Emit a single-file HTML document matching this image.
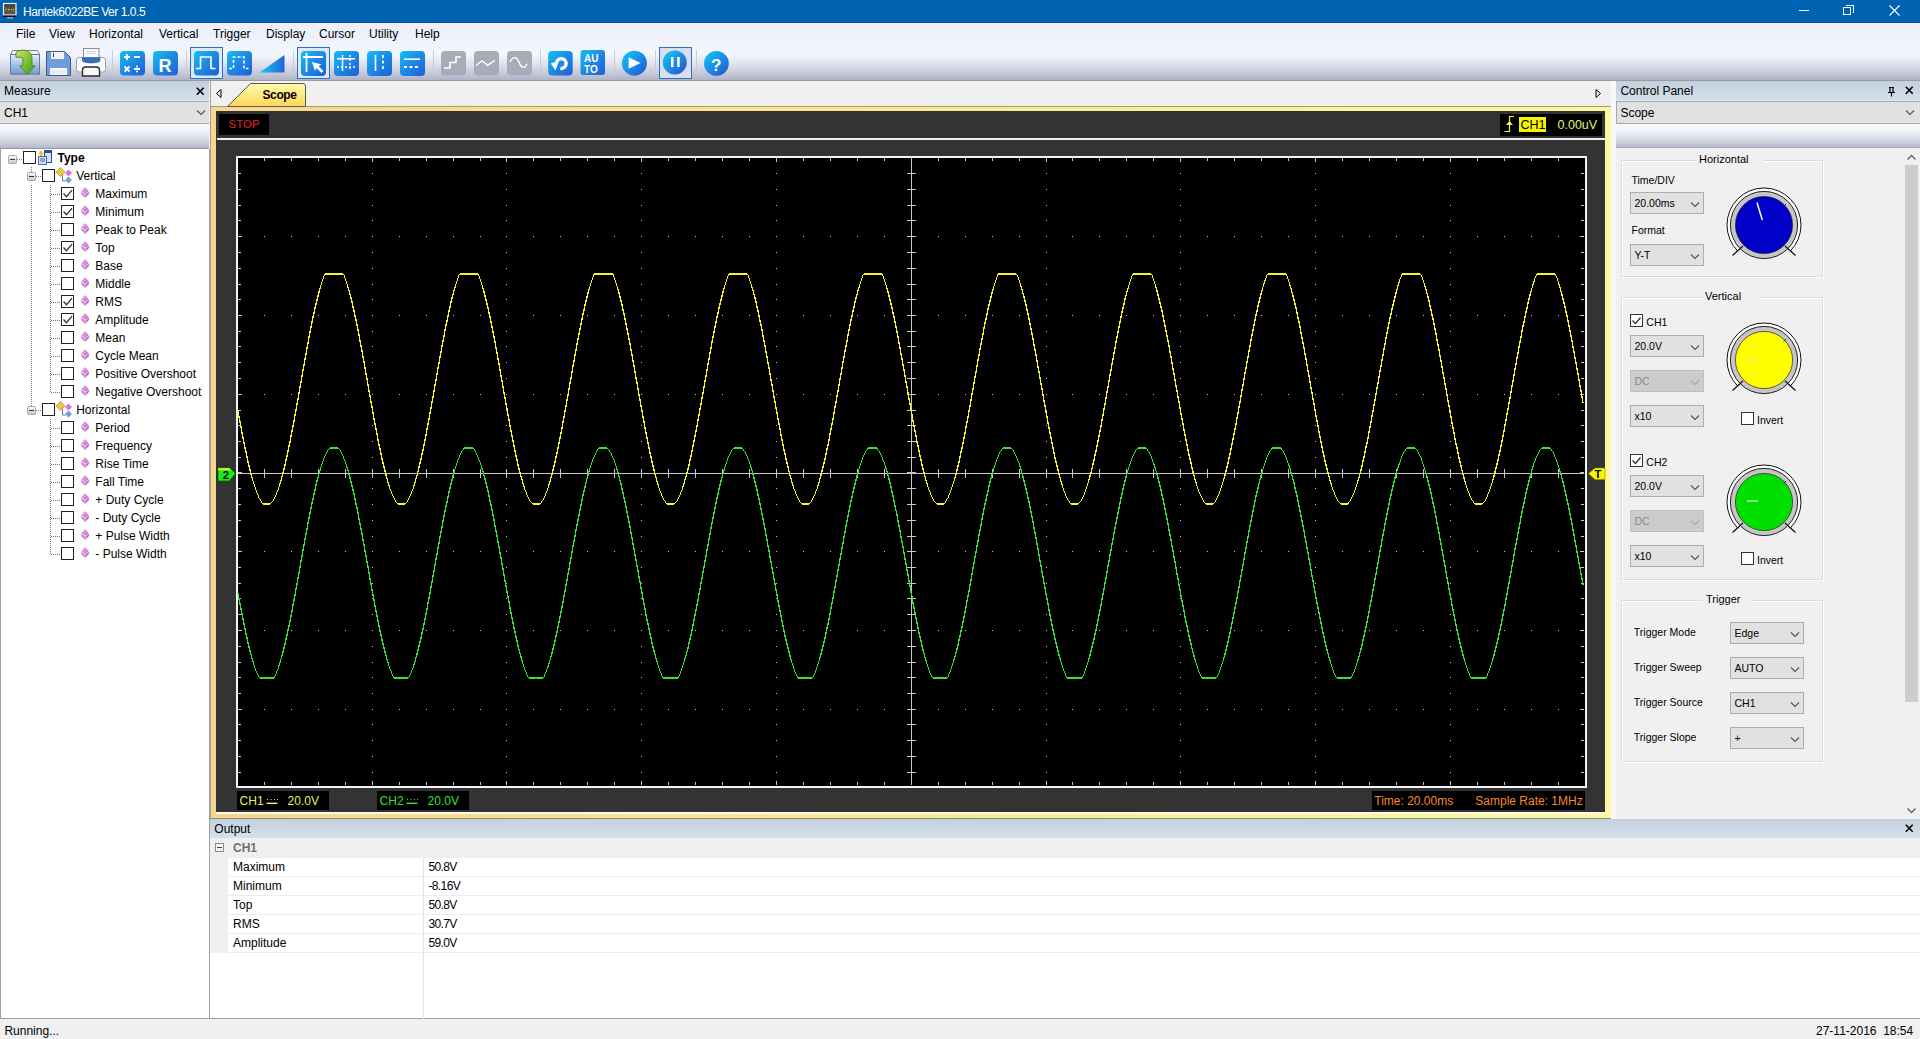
<!DOCTYPE html>
<html><head><meta charset="utf-8">
<style>
*{margin:0;padding:0;box-sizing:border-box}
html,body{width:1920px;height:1039px;overflow:hidden;background:#f0f0f0;font-family:"Liberation Sans",sans-serif;font-size:12px;color:#000}
.a{position:absolute}
.t{position:absolute;white-space:nowrap;line-height:12px;font-size:12px}
.s11{font-size:11px;line-height:11px}
.b{font-weight:bold}
svg{position:absolute;left:0;top:0;overflow:visible}
.combo{position:absolute;background:#e1e1e1;border:1px solid #adadad}
.chev{position:absolute;width:6px;height:6px;border-right:1px solid #333;border-bottom:1px solid #333;transform:rotate(45deg)}
.cb{position:absolute;width:13px;height:13px;border:1px solid #333;background:#fff}
</style></head><body>
<!-- TITLE BAR -->
<div class="a" style="left:0;top:0;width:1920px;height:23px;background:#0063b1;border-bottom:1px solid #0a4f8a"></div>
<svg width="20" height="23" style="left:0;top:0">
<defs><linearGradient id="scr" x1="0" y1="0" x2="0" y2="1"><stop offset="0" stop-color="#2e3a38"/><stop offset="0.5" stop-color="#5c5a40"/><stop offset="1" stop-color="#6a4a3a"/></linearGradient></defs>
<rect x="3.5" y="3.5" width="12.5" height="11.5" fill="url(#scr)" stroke="#eef2fa" stroke-width="1.2"/>
<path d="M5.5 9.5h1M8 9.5h1.5M11 9.5h1M13 9.5h1" stroke="#c8d860" stroke-width="1"/>
<rect x="3" y="15.5" width="13.5" height="1.6" fill="#111"/>
<rect x="7" y="17.2" width="6" height="1.3" fill="#9bb4d8"/>
</svg>
<div class="t" style="left:23px;top:5.8px;color:#fff;letter-spacing:-0.45px">Hantek6022BE Ver 1.0.5</div>
<div class="a" style="left:1799px;top:10px;width:10px;height:1px;background:#fff"></div>
<div class="a" style="left:1843px;top:7px;width:8px;height:8px;border:1px solid #fff"></div>
<div class="a" style="left:1846px;top:5px;width:8px;height:8px;border-top:1px solid #fff;border-right:1px solid #fff"></div>
<svg width="12" height="12" style="left:1889px;top:5px"><path d="M0.5 0.5L10.5 10.5M10.5 0.5L0.5 10.5" stroke="#fff" stroke-width="1.1"/></svg>
<!-- MENU + TOOLBAR -->
<div class="a" style="left:0;top:23px;width:1920px;height:58px;background:linear-gradient(#eceffa 0px,#f0f3fc 20px,#f3f6fd 32px,#dde0ec 42px,#c5c9d9 50px,#b0b4c6 57px);border-bottom:1px solid #9a9aa2"></div>
<div class="t" style="left:16px;top:28px">File</div>
<div class="t" style="left:49px;top:28px">View</div>
<div class="t" style="left:89px;top:28px">Horizontal</div>
<div class="t" style="left:159px;top:28px">Vertical</div>
<div class="t" style="left:213px;top:28px">Trigger</div>
<div class="t" style="left:266px;top:28px">Display</div>
<div class="t" style="left:319px;top:28px">Cursor</div>
<div class="t" style="left:369px;top:28px">Utility</div>
<div class="t" style="left:415px;top:28px">Help</div>
<svg width="740" height="82" style="left:0;top:0">
<defs>
<linearGradient id="bg" x1="0" y1="0" x2="1" y2="1"><stop offset="0" stop-color="#12c0f4"/><stop offset="0.45" stop-color="#1c8ee6"/><stop offset="1" stop-color="#1f5ed6"/></linearGradient>
<linearGradient id="bgc" x1="0" y1="0" x2="1" y2="1"><stop offset="0" stop-color="#0cd0f8"/><stop offset="0.5" stop-color="#1c8ee6"/><stop offset="1" stop-color="#1e50c8"/></linearGradient>
<linearGradient id="fold" x1="0" y1="0" x2="0" y2="1"><stop offset="0" stop-color="#e4ecf8"/><stop offset="1" stop-color="#6f9ad8"/></linearGradient>
<linearGradient id="grn" x1="0" y1="0" x2="1" y2="1"><stop offset="0" stop-color="#c8e860"/><stop offset="1" stop-color="#3a9a10"/></linearGradient>
<linearGradient id="ramp" x1="0" y1="0" x2="1" y2="0"><stop offset="0" stop-color="#20c8f0"/><stop offset="1" stop-color="#1e64d8"/></linearGradient>
</defs>
<!-- open -->
<path d="M12.5 50.5h25l2 4v19.5h-28.5v-19.5z" fill="#f4f6fa" stroke="#7a7f88" stroke-width="1"/>
<rect x="10.5" y="54.5" width="29" height="19.5" fill="url(#fold)" stroke="#6b7a90" stroke-width="1"/>
<path d="M16 52.5c3-2.5 8-3 11.5-1.5c3 1.5 4.5 4 4.5 8v6.8h3.2l-7.8 8.7l-7.8-8.7h3.3v-5.3c0-2-1-3.3-3-3.3h-4z" fill="url(#grn)" stroke="#4a8a18" stroke-width="0.9"/>
<!-- save -->
<path d="M46.5 51.5h18l6 6v18h-24z" fill="#6f9ed8" stroke="#38588a" stroke-width="1"/>
<rect x="51" y="52" width="13" height="7" fill="#eef4fb"/>
<rect x="50" y="68" width="17" height="7" fill="#f4f8fc"/>
<path d="M51 71h15M51 73h15" stroke="#c8d4e4" stroke-width="0.6"/>
<rect x="53" y="53" width="1" height="4" fill="#445"/>
<!-- print -->
<rect x="83.5" y="48.5" width="15.5" height="9" fill="#f8fafd" stroke="#8a8f98" stroke-width="1"/>
<path d="M86 51.5h10M86 53.5h10" stroke="#b8c8e0" stroke-width="0.7"/>
<rect x="76.5" y="57.5" width="29" height="14.5" rx="2.5" fill="#fbfcfd" stroke="#9a9ea8" stroke-width="1"/>
<path d="M82 57.2h18.4v3c0 2-3 3-9.2 3s-9.2-1-9.2-3z" fill="#3d6cb6"/>
<path d="M82.5 70c0-2 1-3 3-3h11c2 0 3 1 3 3v6h-17z" fill="#fdf6f6" stroke="#2a2a2a" stroke-width="1.4"/>
<rect x="112" y="50" width="1" height="27" fill="#c8ccd8"/>
<rect x="186" y="50" width="1" height="27" fill="#c8ccd8"/>
<rect x="293" y="50" width="1" height="27" fill="#c8ccd8"/>
<rect x="433" y="50" width="1" height="27" fill="#c8ccd8"/>
<rect x="540" y="50" width="1" height="27" fill="#c8ccd8"/>
<rect x="614" y="50" width="1" height="27" fill="#c8ccd8"/>
<rect x="655" y="50" width="1" height="27" fill="#c8ccd8"/>
<rect x="696" y="50" width="1" height="27" fill="#c8ccd8"/>
<!-- selected boxes -->
<rect x="190.5" y="47.5" width="32" height="31" fill="#dde8f6" stroke="#2f6fc8" stroke-width="1"/>
<rect x="297.5" y="47.5" width="32" height="31" fill="#dde8f6" stroke="#2f6fc8" stroke-width="1"/>
<rect x="659.5" y="47.5" width="32" height="31" fill="#d8dfec" stroke="#2f6fc8" stroke-width="1"/>
<!-- calc -->
<rect x="120" y="51" width="25" height="24.5" rx="4" fill="url(#bg)"/>
<path d="M124 57h6M127 54v6M134 57h6M124.5 66.5l5 5M129.5 66.5l-5 5M134 69h6" stroke="#fff" stroke-width="1.8"/>
<circle cx="137" cy="66.5" r="1" fill="#fff"/><circle cx="137" cy="71.5" r="1" fill="#fff"/>
<!-- R -->
<rect x="153" y="51" width="25" height="24.5" rx="4" fill="url(#bg)"/>
<text x="158.5" y="71.5" font-family="Liberation Sans" font-weight="bold" font-size="18" fill="#fff">R</text>
<!-- pulse -->
<rect x="194" y="51" width="25" height="24.5" rx="4" fill="url(#bg)"/>
<path d="M196 68.5h4.5v-11.5h10.5v11.5h4.5" fill="none" stroke="#fff" stroke-width="1.6"/>
<!-- dashed pulse -->
<rect x="227" y="51" width="25" height="24.5" rx="4" fill="url(#bg)"/>
<path d="M229 68.5h4.5v-11.5h10.5v11.5h4.5" fill="none" stroke="#fff" stroke-width="1.6" stroke-dasharray="3,2"/>
<!-- ramp -->
<path d="M259.5 72.5L284.5 55V72.5z" fill="url(#ramp)"/>
<!-- cursor -->
<rect x="301" y="51" width="25" height="25" rx="4" fill="url(#bg)"/>
<path d="M306.5 53v19M303 57h20" stroke="#fff" stroke-width="1.8"/>
<path d="M312 62l3 9l1.5-3l5 5l2-2l-5-5l3-1.5z" fill="#fff"/>
<!-- grid -->
<rect x="334" y="51" width="25" height="25" rx="4" fill="url(#bg)"/>
<path d="M342.5 55v16M337 58.8h18" stroke="#fff" stroke-width="1.5"/>
<path d="M350 55v16M337 67h18" stroke="#fff" stroke-width="1.5" stroke-dasharray="2,2"/>
<!-- vlines -->
<rect x="367" y="51" width="25" height="25" rx="4" fill="url(#bg)"/>
<path d="M375.5 55v16" stroke="#fff" stroke-width="1.6"/>
<path d="M383 55v16" stroke="#fff" stroke-width="1.8" stroke-dasharray="3,2.5"/>
<!-- hlines -->
<rect x="400" y="51" width="25" height="25" rx="4" fill="url(#bg)"/>
<path d="M404 59.2h16" stroke="#fff" stroke-width="1.6"/>
<path d="M404 67h16" stroke="#fff" stroke-width="1.8" stroke-dasharray="3,2.5"/>
<!-- gray -->
<rect x="441" y="51" width="25" height="24.5" rx="4" fill="#a9abb7"/>
<path d="M444 68h6v-5.5h6v-5.5h5" fill="none" stroke="#fff" stroke-width="1.6"/>
<rect x="474" y="51" width="25" height="24.5" rx="4" fill="#a9abb7"/>
<path d="M476 65.5l6-4.7l5.7 4.5l7-4.9" fill="none" stroke="#fff" stroke-width="1.4"/>
<rect x="507" y="51" width="25" height="24.5" rx="4" fill="#a9abb7"/>
<path d="M510 62c2-4 4-5 6-4c2 1 3 5 5 8c2 2 4 2 6-2" fill="none" stroke="#fff" stroke-width="1.4"/>
<!-- refresh -->
<rect x="548.2" y="51" width="24.5" height="24.5" rx="4" fill="url(#bg)"/>
<path d="M560.4 68.4A4.9 4.9 0 1 0 556.6 61.9" fill="none" stroke="#fff" stroke-width="3.4"/>
<path d="M550.8 63.5L559 60.6L555.5 70.4z" fill="#fff"/>
<!-- auto -->
<rect x="580.5" y="50" width="24.5" height="25" rx="3" fill="url(#bg)"/>
<text x="584" y="62" font-family="Liberation Sans" font-weight="bold" font-size="10" fill="#fff">AU</text>
<text x="584" y="73" font-family="Liberation Sans" font-weight="bold" font-size="10" fill="#fff">TO</text>
<!-- play -->
<circle cx="634.4" cy="63.2" r="12.5" fill="url(#bgc)"/>
<path d="M628.6 57.3v11.4l11.9-5.7z" fill="#fff"/>
<!-- pause -->
<circle cx="674.8" cy="62.5" r="12" fill="url(#bgc)"/>
<rect x="671" y="57" width="2.5" height="10" fill="#fff"/><rect x="677.2" y="57" width="2.5" height="10" fill="#fff"/>
<!-- help -->
<circle cx="716.4" cy="63.4" r="12.4" fill="url(#bgc)"/>
<text x="711" y="70.5" font-family="Liberation Sans" font-weight="bold" font-size="17" fill="#fff">?</text>
</svg>
<div class="a" style="left:210px;top:81px;width:1401px;height:26px;background:#f0f0f0;border-left:1px solid #a0a0a0;border-bottom:1px solid #a09a78"></div>
<svg width="1620" height="110" style="left:0;top:0"><defs><linearGradient id="tab" x1="0" y1="0" x2="0" y2="1"><stop offset="0" stop-color="#fffbb0"/><stop offset="0.5" stop-color="#ffe880"/><stop offset="1" stop-color="#fcd560"/></linearGradient></defs><path d="M227.5 106.5L250.5 83.5H303a2.5 2.5 0 0 1 2.5 2.5V106.5z" fill="url(#tab)" stroke="#5a5a50" stroke-width="1"/><path d="M221 89.5L216.5 93.5L221 97.5z" fill="none" stroke="#000" stroke-width="1"/><path d="M1596 89.5L1600.5 93.5L1596 97.5z" fill="none" stroke="#000" stroke-width="1"/></svg>
<div class="t" style="left:262.5px;top:89.04px;font-size:12px;line-height:12px;font-weight:bold;letter-spacing:-0.4px">Scope</div>
<div class="a" style="left:210px;top:107px;width:1401px;height:712px;background:linear-gradient(90deg,#f8d68a,#fbe48e 35%,#f8ee90 60%,#fff6a4);border-left:1px solid #a0a0a0;border-bottom:1px solid #8a8a80"></div>
<div class="a" style="left:216px;top:111px;width:1389px;height:703px;background:#333333;border-bottom:2px solid #fbfaf0"></div>
<div class="a" style="left:219px;top:114px;width:50px;height:21px;background:#000"></div>
<div class="t" style="left:228.5px;top:118.97px;font-size:11.5px;line-height:11.5px;color:#e02424">STOP</div>
<div class="a" style="left:217px;top:138px;width:1388px;height:2px;background:#f0f0f0"></div>
<div class="a" style="left:1500px;top:114px;width:102px;height:22px;background:#000"></div>
<svg width="12" height="18" style="left:1503px;top:115px"><path d="M1.5 16.5H6.5V1.5H11" fill="none" stroke="#f0f060" stroke-width="1.2"/><path d="M3 10l3.5-4l3.5 4z" fill="#f0f060"/></svg>
<div class="a" style="left:1519px;top:117px;width:27px;height:15px;background:#f4f400"></div>
<div class="t" style="left:1520.5px;top:119.02px;font-size:12.5px;line-height:12.5px;color:#000">CH1</div>
<div class="t" style="left:1557.5px;top:119.02px;font-size:12.5px;line-height:12.5px;color:#e8f070">0.00uV</div>
<div class="a" style="left:236px;top:156px;width:1351px;height:632px;background:#000;border:2px solid #f4f4f4"></div>
<svg width="1920" height="1039" style="left:0;top:0"><path d="M506 756h1v1h-1zM749 236h1v1h-1zM1180 441h1v1h-1zM318 315h1v1h-1zM533 630h1v1h-1zM1288 630h1v1h-1zM1315 504h1v1h-1zM641 410h1v1h-1zM372 551h1v1h-1zM1261 551h1v1h-1zM1046 724h1v1h-1zM1180 724h1v1h-1zM291 315h1v1h-1zM506 630h1v1h-1zM1180 315h1v1h-1zM1504 394h1v1h-1zM641 693h1v1h-1zM1315 378h1v1h-1zM345 551h1v1h-1zM776 756h1v1h-1zM1019 236h1v1h-1zM641 284h1v1h-1zM372 425h1v1h-1zM1234 551h1v1h-1zM1558 630h1v1h-1zM1046 598h1v1h-1zM506 724h1v1h-1zM1180 598h1v1h-1zM1046 189h1v1h-1zM722 394h1v1h-1zM1180 189h1v1h-1zM1477 394h1v1h-1zM1315 252h1v1h-1zM992 236h1v1h-1zM1126 236h1v1h-1zM1046 472h1v1h-1zM506 598h1v1h-1zM1504 551h1v1h-1zM506 189h1v1h-1zM399 630h1v1h-1zM776 724h1v1h-1zM1099 236h1v1h-1zM641 252h1v1h-1zM1423 315h1v1h-1zM776 315h1v1h-1zM1046 346h1v1h-1zM1477 551h1v1h-1zM506 472h1v1h-1zM1315 220h1v1h-1zM830 709h1v1h-1zM776 598h1v1h-1zM776 189h1v1h-1zM1207 394h1v1h-1zM506 346h1v1h-1zM722 236h1v1h-1zM264 315h1v1h-1zM803 709h1v1h-1zM776 472h1v1h-1zM1531 630h1v1h-1zM506 220h1v1h-1zM1153 315h1v1h-1zM1450 394h1v1h-1zM695 394h1v1h-1zM372 662h1v1h-1zM776 346h1v1h-1zM1207 551h1v1h-1zM749 630h1v1h-1zM1450 677h1v1h-1zM560 709h1v1h-1zM372 756h1v1h-1zM1450 268h1v1h-1zM1396 315h1v1h-1zM1046 709h1v1h-1zM965 394h1v1h-1zM318 394h1v1h-1zM533 709h1v1h-1zM1450 551h1v1h-1zM803 551h1v1h-1zM372 630h1v1h-1zM1261 630h1v1h-1zM938 394h1v1h-1zM1046 583h1v1h-1zM291 394h1v1h-1zM506 709h1v1h-1zM1180 394h1v1h-1zM641 772h1v1h-1zM1315 457h1v1h-1zM1450 425h1v1h-1zM695 236h1v1h-1zM345 630h1v1h-1zM1019 315h1v1h-1zM1234 630h1v1h-1zM372 504h1v1h-1zM1046 677h1v1h-1zM1180 677h1v1h-1zM318 551h1v1h-1zM506 583h1v1h-1zM1315 740h1v1h-1zM1180 268h1v1h-1zM560 551h1v1h-1zM641 646h1v1h-1zM1315 331h1v1h-1zM992 315h1v1h-1zM1126 315h1v1h-1zM776 709h1v1h-1zM372 378h1v1h-1zM1046 551h1v1h-1zM291 551h1v1h-1zM965 236h1v1h-1zM1180 551h1v1h-1zM1504 630h1v1h-1zM533 551h1v1h-1zM506 457h1v1h-1zM1315 614h1v1h-1zM641 520h1v1h-1zM1099 315h1v1h-1zM1315 205h1v1h-1zM372 472h1v1h-1zM668 394h1v1h-1zM1423 394h1v1h-1zM776 583h1v1h-1zM938 236h1v1h-1zM1046 425h1v1h-1zM1477 630h1v1h-1zM506 551h1v1h-1zM1180 425h1v1h-1zM641 614h1v1h-1zM1315 488h1v1h-1zM776 677h1v1h-1zM372 346h1v1h-1zM1369 315h1v1h-1zM1046 299h1v1h-1zM506 425h1v1h-1zM722 315h1v1h-1zM264 394h1v1h-1zM641 488h1v1h-1zM776 551h1v1h-1zM372 220h1v1h-1zM1342 315h1v1h-1zM1046 173h1v1h-1zM506 299h1v1h-1zM1450 662h1v1h-1zM1153 394h1v1h-1zM641 362h1v1h-1zM668 236h1v1h-1zM1423 236h1v1h-1zM776 425h1v1h-1zM1207 630h1v1h-1zM749 709h1v1h-1zM264 551h1v1h-1zM1450 756h1v1h-1zM506 173h1v1h-1zM641 236h1v1h-1zM776 299h1v1h-1zM1396 394h1v1h-1zM1450 630h1v1h-1zM1019 709h1v1h-1zM372 709h1v1h-1zM1072 315h1v1h-1zM776 173h1v1h-1zM1046 662h1v1h-1zM1180 662h1v1h-1zM911 236h1v1h-1zM453 315h1v1h-1zM992 709h1v1h-1zM1450 504h1v1h-1zM1153 236h1v1h-1zM695 315h1v1h-1zM345 709h1v1h-1zM372 583h1v1h-1zM1396 551h1v1h-1zM749 551h1v1h-1zM1180 756h1v1h-1zM318 630h1v1h-1zM1046 536h1v1h-1zM506 662h1v1h-1zM1450 378h1v1h-1zM1126 394h1v1h-1zM372 457h1v1h-1zM1046 630h1v1h-1zM291 630h1v1h-1zM965 315h1v1h-1zM1180 630h1v1h-1zM1504 709h1v1h-1zM1046 410h1v1h-1zM506 536h1v1h-1zM1315 693h1v1h-1zM1450 472h1v1h-1zM1019 551h1v1h-1zM372 740h1v1h-1zM1315 284h1v1h-1zM1450 252h1v1h-1zM1099 394h1v1h-1zM776 662h1v1h-1zM372 331h1v1h-1zM938 315h1v1h-1zM1046 504h1v1h-1zM722 709h1v1h-1zM1180 504h1v1h-1zM1477 709h1v1h-1zM506 410h1v1h-1zM1315 567h1v1h-1zM1450 346h1v1h-1zM992 551h1v1h-1zM1126 551h1v1h-1zM776 536h1v1h-1zM372 205h1v1h-1zM480 394h1v1h-1zM1369 394h1v1h-1zM1046 378h1v1h-1zM506 504h1v1h-1zM1180 378h1v1h-1zM884 236h1v1h-1zM506 284h1v1h-1zM641 567h1v1h-1zM1315 441h1v1h-1zM1450 220h1v1h-1zM1423 630h1v1h-1zM776 630h1v1h-1zM372 299h1v1h-1zM776 410h1v1h-1zM1342 394h1v1h-1zM1180 472h1v1h-1zM1046 252h1v1h-1zM506 378h1v1h-1zM857 236h1v1h-1zM641 441h1v1h-1zM668 315h1v1h-1zM776 504h1v1h-1zM1207 709h1v1h-1zM372 173h1v1h-1zM722 551h1v1h-1zM1180 346h1v1h-1zM264 630h1v1h-1zM641 724h1v1h-1zM506 252h1v1h-1zM641 315h1v1h-1zM776 378h1v1h-1zM480 236h1v1h-1zM614 236h1v1h-1zM1046 220h1v1h-1zM1369 236h1v1h-1zM1180 220h1v1h-1zM1153 630h1v1h-1zM1450 709h1v1h-1zM695 709h1v1h-1zM641 598h1v1h-1zM641 189h1v1h-1zM1072 394h1v1h-1zM776 252h1v1h-1zM587 236h1v1h-1zM1342 236h1v1h-1zM911 315h1v1h-1zM453 394h1v1h-1zM1450 583h1v1h-1zM1396 630h1v1h-1zM965 709h1v1h-1zM318 709h1v1h-1zM1450 457h1v1h-1zM372 536h1v1h-1zM938 709h1v1h-1zM776 220h1v1h-1zM291 709h1v1h-1zM1180 709h1v1h-1zM1315 772h1v1h-1zM1450 740h1v1h-1zM695 551h1v1h-1zM1019 630h1v1h-1zM1450 331h1v1h-1zM1072 236h1v1h-1zM372 410h1v1h-1zM1180 583h1v1h-1zM453 236h1v1h-1zM1315 646h1v1h-1zM992 630h1v1h-1zM1126 630h1v1h-1zM372 693h1v1h-1zM1450 205h1v1h-1zM965 551h1v1h-1zM372 284h1v1h-1zM1046 457h1v1h-1zM506 772h1v1h-1zM1180 457h1v1h-1zM884 315h1v1h-1zM1099 630h1v1h-1zM1315 520h1v1h-1zM1450 299h1v1h-1zM668 709h1v1h-1zM1423 709h1v1h-1zM938 551h1v1h-1zM1046 740h1v1h-1zM1180 740h1v1h-1zM1046 331h1v1h-1zM1180 331h1v1h-1zM857 315h1v1h-1zM426 394h1v1h-1zM1315 394h1v1h-1zM1450 173h1v1h-1zM830 236h1v1h-1zM372 252h1v1h-1zM1369 630h1v1h-1zM1046 614h1v1h-1zM506 740h1v1h-1zM722 630h1v1h-1zM264 709h1v1h-1zM1046 205h1v1h-1zM506 331h1v1h-1zM1180 205h1v1h-1zM1288 394h1v1h-1zM641 394h1v1h-1zM1315 268h1v1h-1zM776 457h1v1h-1zM1342 630h1v1h-1zM480 315h1v1h-1zM1046 488h1v1h-1zM614 315h1v1h-1zM506 614h1v1h-1zM1180 299h1v1h-1zM1153 709h1v1h-1zM641 677h1v1h-1zM506 205h1v1h-1zM1315 362h1v1h-1zM668 551h1v1h-1zM1423 551h1v1h-1zM776 740h1v1h-1zM641 268h1v1h-1zM776 331h1v1h-1zM1558 394h1v1h-1zM587 315h1v1h-1zM911 394h1v1h-1zM506 488h1v1h-1zM1180 173h1v1h-1zM426 236h1v1h-1zM641 551h1v1h-1zM1315 236h1v1h-1zM776 614h1v1h-1zM1396 709h1v1h-1zM776 205h1v1h-1zM506 362h1v1h-1zM1450 536h1v1h-1zM1288 236h1v1h-1zM641 425h1v1h-1zM399 394h1v1h-1zM1072 630h1v1h-1zM776 488h1v1h-1zM911 551h1v1h-1zM453 630h1v1h-1zM1153 551h1v1h-1zM695 630h1v1h-1zM1450 410h1v1h-1zM1558 236h1v1h-1zM1450 693h1v1h-1zM1126 709h1v1h-1zM372 772h1v1h-1zM1450 284h1v1h-1zM965 630h1v1h-1zM1180 536h1v1h-1zM1531 394h1v1h-1zM884 394h1v1h-1zM1099 709h1v1h-1zM1450 567h1v1h-1zM399 236h1v1h-1zM372 646h1v1h-1zM938 630h1v1h-1zM1180 410h1v1h-1zM857 394h1v1h-1zM372 520h1v1h-1zM830 315h1v1h-1zM480 709h1v1h-1zM1369 709h1v1h-1zM1046 693h1v1h-1zM1180 693h1v1h-1zM884 551h1v1h-1zM1046 284h1v1h-1zM1315 756h1v1h-1zM1180 284h1v1h-1zM641 662h1v1h-1zM372 614h1v1h-1zM803 315h1v1h-1zM1342 709h1v1h-1zM1261 394h1v1h-1zM1046 567h1v1h-1zM614 394h1v1h-1zM506 693h1v1h-1zM857 551h1v1h-1zM1531 236h1v1h-1zM641 756h1v1h-1zM1099 551h1v1h-1zM668 630h1v1h-1zM372 488h1v1h-1zM1234 394h1v1h-1zM587 394h1v1h-1zM1046 441h1v1h-1zM506 567h1v1h-1zM1315 724h1v1h-1zM1180 252h1v1h-1zM426 315h1v1h-1zM641 630h1v1h-1zM1315 315h1v1h-1zM560 315h1v1h-1zM776 693h1v1h-1zM372 362h1v1h-1zM480 551h1v1h-1zM614 551h1v1h-1zM776 284h1v1h-1zM1369 551h1v1h-1zM1046 315h1v1h-1zM506 441h1v1h-1zM1315 598h1v1h-1zM533 315h1v1h-1zM1288 315h1v1h-1zM641 504h1v1h-1zM1315 189h1v1h-1zM1072 709h1v1h-1zM776 567h1v1h-1zM372 236h1v1h-1zM587 551h1v1h-1zM1342 551h1v1h-1zM1261 236h1v1h-1zM911 630h1v1h-1zM453 709h1v1h-1zM506 315h1v1h-1zM1315 472h1v1h-1zM641 378h1v1h-1zM345 236h1v1h-1zM776 441h1v1h-1zM1234 236h1v1h-1zM1558 315h1v1h-1zM1450 772h1v1h-1zM641 472h1v1h-1zM1315 346h1v1h-1zM1450 646h1v1h-1zM1504 236h1v1h-1zM641 346h1v1h-1zM399 315h1v1h-1zM1072 551h1v1h-1zM453 551h1v1h-1zM1477 236h1v1h-1zM1450 520h1v1h-1zM641 220h1v1h-1zM830 394h1v1h-1zM1046 772h1v1h-1zM1180 772h1v1h-1zM884 630h1v1h-1zM1450 614h1v1h-1zM803 394h1v1h-1zM1046 646h1v1h-1zM1180 646h1v1h-1zM857 630h1v1h-1zM1531 315h1v1h-1zM426 709h1v1h-1zM1315 709h1v1h-1zM1450 488h1v1h-1zM830 551h1v1h-1zM372 567h1v1h-1zM1046 520h1v1h-1zM1207 236h1v1h-1zM749 315h1v1h-1zM506 646h1v1h-1zM1180 520h1v1h-1zM1288 709h1v1h-1zM641 709h1v1h-1zM1315 583h1v1h-1zM1450 362h1v1h-1zM560 394h1v1h-1zM776 772h1v1h-1zM372 441h1v1h-1zM480 630h1v1h-1zM614 630h1v1h-1zM1180 614h1v1h-1zM1046 394h1v1h-1zM506 520h1v1h-1zM1315 677h1v1h-1zM533 394h1v1h-1zM641 583h1v1h-1zM372 724h1v1h-1zM1450 236h1v1h-1zM803 236h1v1h-1zM776 646h1v1h-1zM372 315h1v1h-1zM587 630h1v1h-1zM1558 709h1v1h-1zM1261 315h1v1h-1zM911 709h1v1h-1zM1180 488h1v1h-1zM1046 268h1v1h-1zM426 551h1v1h-1zM506 394h1v1h-1zM1315 551h1v1h-1zM641 457h1v1h-1zM372 598h1v1h-1zM345 315h1v1h-1zM776 520h1v1h-1zM1234 315h1v1h-1zM372 189h1v1h-1zM1046 362h1v1h-1zM506 677h1v1h-1zM1180 362h1v1h-1zM318 236h1v1h-1zM1288 551h1v1h-1zM641 740h1v1h-1zM506 268h1v1h-1zM1315 425h1v1h-1zM560 236h1v1h-1zM399 709h1v1h-1zM641 331h1v1h-1zM776 394h1v1h-1zM1046 236h1v1h-1zM291 236h1v1h-1zM1180 236h1v1h-1zM1504 315h1v1h-1zM533 236h1v1h-1zM1315 299h1v1h-1zM641 205h1v1h-1zM1558 551h1v1h-1zM776 268h1v1h-1zM1477 315h1v1h-1zM506 236h1v1h-1zM641 299h1v1h-1zM1315 173h1v1h-1zM776 362h1v1h-1zM1531 709h1v1h-1zM884 709h1v1h-1zM399 551h1v1h-1zM641 173h1v1h-1zM776 236h1v1h-1zM857 709h1v1h-1zM830 630h1v1h-1zM1207 315h1v1h-1zM749 394h1v1h-1zM1315 662h1v1h-1zM264 236h1v1h-1zM1450 441h1v1h-1zM803 630h1v1h-1zM1261 709h1v1h-1zM614 709h1v1h-1zM1531 551h1v1h-1zM1450 724h1v1h-1zM1315 536h1v1h-1zM1450 315h1v1h-1zM1019 394h1v1h-1zM1234 709h1v1h-1zM372 394h1v1h-1zM587 709h1v1h-1zM1046 756h1v1h-1zM1180 567h1v1h-1zM426 630h1v1h-1zM1315 630h1v1h-1zM1450 598h1v1h-1zM560 630h1v1h-1zM641 536h1v1h-1zM372 677h1v1h-1zM1315 410h1v1h-1zM1450 189h1v1h-1zM992 394h1v1h-1zM345 394h1v1h-1zM372 268h1v1h-1zM1396 236h1v1h-1z" fill="#c0c0c0"/>
<rect x="238" y="473" width="1346" height="1" fill="#c8c8c8"/>
<rect x="911" y="158" width="1" height="627" fill="#c8c8c8"/>
<path d="M264 469h1v9h-1zM291 469h1v9h-1zM318 469h1v9h-1zM345 469h1v9h-1zM372 469h1v9h-1zM399 469h1v9h-1zM426 469h1v9h-1zM453 469h1v9h-1zM480 469h1v9h-1zM506 469h1v9h-1zM533 469h1v9h-1zM560 469h1v9h-1zM587 469h1v9h-1zM614 469h1v9h-1zM641 469h1v9h-1zM668 469h1v9h-1zM695 469h1v9h-1zM722 469h1v9h-1zM749 469h1v9h-1zM776 469h1v9h-1zM803 469h1v9h-1zM830 469h1v9h-1zM857 469h1v9h-1zM884 469h1v9h-1zM911 469h1v9h-1zM938 469h1v9h-1zM965 469h1v9h-1zM992 469h1v9h-1zM1019 469h1v9h-1zM1046 469h1v9h-1zM1072 469h1v9h-1zM1099 469h1v9h-1zM1126 469h1v9h-1zM1153 469h1v9h-1zM1180 469h1v9h-1zM1207 469h1v9h-1zM1234 469h1v9h-1zM1261 469h1v9h-1zM1288 469h1v9h-1zM1315 469h1v9h-1zM1342 469h1v9h-1zM1369 469h1v9h-1zM1396 469h1v9h-1zM1423 469h1v9h-1zM1450 469h1v9h-1zM1477 469h1v9h-1zM1504 469h1v9h-1zM1531 469h1v9h-1zM1558 469h1v9h-1zM907 173h9v1h-9zM907 189h9v1h-9zM907 205h9v1h-9zM907 220h9v1h-9zM907 236h9v1h-9zM907 252h9v1h-9zM907 268h9v1h-9zM907 284h9v1h-9zM907 299h9v1h-9zM907 315h9v1h-9zM907 331h9v1h-9zM907 346h9v1h-9zM907 362h9v1h-9zM907 378h9v1h-9zM907 394h9v1h-9zM907 410h9v1h-9zM907 425h9v1h-9zM907 441h9v1h-9zM907 457h9v1h-9zM907 472h9v1h-9zM907 488h9v1h-9zM907 504h9v1h-9zM907 520h9v1h-9zM907 536h9v1h-9zM907 551h9v1h-9zM907 567h9v1h-9zM907 583h9v1h-9zM907 598h9v1h-9zM907 614h9v1h-9zM907 630h9v1h-9zM907 646h9v1h-9zM907 662h9v1h-9zM907 677h9v1h-9zM907 693h9v1h-9zM907 709h9v1h-9zM907 724h9v1h-9zM907 740h9v1h-9zM907 756h9v1h-9zM907 772h9v1h-9zM264 158h1v3h-1zM264 782h1v3h-1zM291 158h1v3h-1zM291 782h1v3h-1zM318 158h1v3h-1zM318 782h1v3h-1zM345 158h1v3h-1zM345 782h1v3h-1zM372 158h1v4h-1zM372 781h1v4h-1zM399 158h1v3h-1zM399 782h1v3h-1zM426 158h1v3h-1zM426 782h1v3h-1zM453 158h1v3h-1zM453 782h1v3h-1zM480 158h1v3h-1zM480 782h1v3h-1zM506 158h1v4h-1zM506 781h1v4h-1zM533 158h1v3h-1zM533 782h1v3h-1zM560 158h1v3h-1zM560 782h1v3h-1zM587 158h1v3h-1zM587 782h1v3h-1zM614 158h1v3h-1zM614 782h1v3h-1zM641 158h1v4h-1zM641 781h1v4h-1zM668 158h1v3h-1zM668 782h1v3h-1zM695 158h1v3h-1zM695 782h1v3h-1zM722 158h1v3h-1zM722 782h1v3h-1zM749 158h1v3h-1zM749 782h1v3h-1zM776 158h1v4h-1zM776 781h1v4h-1zM803 158h1v3h-1zM803 782h1v3h-1zM830 158h1v3h-1zM830 782h1v3h-1zM857 158h1v3h-1zM857 782h1v3h-1zM884 158h1v3h-1zM884 782h1v3h-1zM911 158h1v4h-1zM911 781h1v4h-1zM938 158h1v3h-1zM938 782h1v3h-1zM965 158h1v3h-1zM965 782h1v3h-1zM992 158h1v3h-1zM992 782h1v3h-1zM1019 158h1v3h-1zM1019 782h1v3h-1zM1046 158h1v4h-1zM1046 781h1v4h-1zM1072 158h1v3h-1zM1072 782h1v3h-1zM1099 158h1v3h-1zM1099 782h1v3h-1zM1126 158h1v3h-1zM1126 782h1v3h-1zM1153 158h1v3h-1zM1153 782h1v3h-1zM1180 158h1v4h-1zM1180 781h1v4h-1zM1207 158h1v3h-1zM1207 782h1v3h-1zM1234 158h1v3h-1zM1234 782h1v3h-1zM1261 158h1v3h-1zM1261 782h1v3h-1zM1288 158h1v3h-1zM1288 782h1v3h-1zM1315 158h1v4h-1zM1315 781h1v4h-1zM1342 158h1v3h-1zM1342 782h1v3h-1zM1369 158h1v3h-1zM1369 782h1v3h-1zM1396 158h1v3h-1zM1396 782h1v3h-1zM1423 158h1v3h-1zM1423 782h1v3h-1zM1450 158h1v4h-1zM1450 781h1v4h-1zM1477 158h1v3h-1zM1477 782h1v3h-1zM1504 158h1v3h-1zM1504 782h1v3h-1zM1531 158h1v3h-1zM1531 782h1v3h-1zM1558 158h1v3h-1zM1558 782h1v3h-1zM238 173h3v1h-3zM1581 173h3v1h-3zM238 189h3v1h-3zM1581 189h3v1h-3zM238 205h3v1h-3zM1581 205h3v1h-3zM238 220h3v1h-3zM1581 220h3v1h-3zM238 236h4v1h-4zM1580 236h4v1h-4zM238 252h3v1h-3zM1581 252h3v1h-3zM238 268h3v1h-3zM1581 268h3v1h-3zM238 284h3v1h-3zM1581 284h3v1h-3zM238 299h3v1h-3zM1581 299h3v1h-3zM238 315h4v1h-4zM1580 315h4v1h-4zM238 331h3v1h-3zM1581 331h3v1h-3zM238 346h3v1h-3zM1581 346h3v1h-3zM238 362h3v1h-3zM1581 362h3v1h-3zM238 378h3v1h-3zM1581 378h3v1h-3zM238 394h4v1h-4zM1580 394h4v1h-4zM238 410h3v1h-3zM1581 410h3v1h-3zM238 425h3v1h-3zM1581 425h3v1h-3zM238 441h3v1h-3zM1581 441h3v1h-3zM238 457h3v1h-3zM1581 457h3v1h-3zM238 472h4v1h-4zM1580 472h4v1h-4zM238 488h3v1h-3zM1581 488h3v1h-3zM238 504h3v1h-3zM1581 504h3v1h-3zM238 520h3v1h-3zM1581 520h3v1h-3zM238 536h3v1h-3zM1581 536h3v1h-3zM238 551h4v1h-4zM1580 551h4v1h-4zM238 567h3v1h-3zM1581 567h3v1h-3zM238 583h3v1h-3zM1581 583h3v1h-3zM238 598h3v1h-3zM1581 598h3v1h-3zM238 614h3v1h-3zM1581 614h3v1h-3zM238 630h4v1h-4zM1580 630h4v1h-4zM238 646h3v1h-3zM1581 646h3v1h-3zM238 662h3v1h-3zM1581 662h3v1h-3zM238 677h3v1h-3zM1581 677h3v1h-3zM238 693h3v1h-3zM1581 693h3v1h-3zM238 709h4v1h-4zM1580 709h4v1h-4zM238 724h3v1h-3zM1581 724h3v1h-3zM238 740h3v1h-3zM1581 740h3v1h-3zM238 756h3v1h-3zM1581 756h3v1h-3zM238 772h3v1h-3zM1581 772h3v1h-3z" fill="#c8c8c8"/>
<polyline points="238,411 239,417 240,422 241,427 242,433 243,438 244,443 245,448 246,452 247,457 248,462 249,466 250,470 251,474 252,478 253,481 254,484 255,487 256,490 257,493 258,495 259,498 260,499 261,501 262,503 263,504 264,504 265,504 266,504 267,504 268,504 269,504 270,504 271,503 272,502 273,501 274,499 275,497 276,495 277,492 278,490 279,487 280,484 281,480 282,477 283,473 284,469 285,465 286,460 287,456 288,451 289,446 290,442 291,436 292,431 293,426 294,421 295,415 296,410 297,404 298,399 299,393 300,387 301,382 302,376 303,370 304,365 305,359 306,354 307,348 308,343 309,337 310,332 311,327 312,322 313,317 314,313 315,308 316,304 317,300 318,296 319,292 320,288 321,285 322,282 323,279 324,276 325,274 326,274 327,274 328,274 329,274 330,274 331,274 332,274 333,274 334,274 335,274 336,274 337,274 338,274 339,274 340,274 341,274 342,274 343,274 344,275 345,278 346,281 347,284 348,287 349,291 350,294 351,298 352,302 353,307 354,311 355,316 356,320 357,325 358,330 359,335 360,341 361,346 362,351 363,357 364,362 365,368 366,374 367,379 368,385 369,391 370,396 371,402 372,407 373,413 374,419 375,424 376,429 377,434 378,440 379,445 380,449 381,454 382,459 383,463 384,467 385,471 386,475 387,479 388,482 389,486 390,489 391,491 392,494 393,496 394,498 395,500 396,502 397,503 398,504 399,504 400,504 401,504 402,504 403,504 404,504 405,504 406,503 407,502 408,500 409,498 410,496 411,494 412,491 413,489 414,486 415,482 416,479 417,475 418,472 419,467 420,463 421,459 422,454 423,450 424,445 425,440 426,435 427,429 428,424 429,419 430,413 431,408 432,402 433,397 434,391 435,385 436,380 437,374 438,368 439,363 440,357 441,352 442,346 443,341 444,336 445,330 446,325 447,321 448,316 449,311 450,307 451,302 452,298 453,294 454,291 455,287 456,284 457,281 458,278 459,275 460,274 461,274 462,274 463,274 464,274 465,274 466,274 467,274 468,274 469,274 470,274 471,274 472,274 473,274 474,274 475,274 476,274 477,274 478,274 479,276 480,279 481,282 482,285 483,288 484,292 485,296 486,300 487,304 488,308 489,313 490,317 491,322 492,327 493,332 494,337 495,342 496,348 497,353 498,359 499,364 500,370 501,376 502,381 503,387 504,393 505,398 506,404 507,409 508,415 509,420 510,426 511,431 512,436 513,441 514,446 515,451 516,456 517,460 518,465 519,469 520,473 521,476 522,480 523,483 524,487 525,490 526,492 527,495 528,497 529,499 530,501 531,502 532,503 533,504 534,504 535,504 536,504 537,504 538,504 539,504 540,504 541,503 542,501 543,500 544,498 545,496 546,493 547,491 548,488 549,485 550,481 551,478 552,474 553,470 554,466 555,462 556,457 557,453 558,448 559,443 560,438 561,433 562,428 563,422 564,417 565,411 566,406 567,400 568,395 569,389 570,383 571,378 572,372 573,366 574,361 575,355 576,350 577,344 578,339 579,334 580,329 581,324 582,319 583,314 584,310 585,305 586,301 587,297 588,293 589,289 590,286 591,283 592,280 593,277 594,274 595,274 596,274 597,274 598,274 599,274 600,274 601,274 602,274 603,274 604,274 605,274 606,274 607,274 608,274 609,274 610,274 611,274 612,274 613,274 614,277 615,280 616,283 617,286 618,289 619,293 620,297 621,301 622,305 623,310 624,314 625,319 626,324 627,329 628,334 629,339 630,344 631,350 632,355 633,361 634,366 635,372 636,378 637,383 638,389 639,395 640,400 641,406 642,411 643,417 644,422 645,428 646,433 647,438 648,443 649,448 650,453 651,457 652,462 653,466 654,470 655,474 656,478 657,481 658,485 659,488 660,491 661,493 662,496 663,498 664,500 665,501 666,503 667,504 668,504 669,504 670,504 671,504 672,504 673,504 674,504 675,503 676,502 677,501 678,499 679,497 680,495 681,492 682,490 683,487 684,483 685,480 686,476 687,473 688,469 689,465 690,460 691,456 692,451 693,446 694,441 695,436 696,431 697,426 698,420 699,415 700,409 701,404 702,398 703,393 704,387 705,381 706,376 707,370 708,364 709,359 710,353 711,348 712,342 713,337 714,332 715,327 716,322 717,317 718,313 719,308 720,304 721,300 722,296 723,292 724,288 725,285 726,282 727,279 728,276 729,274 730,274 731,274 732,274 733,274 734,274 735,274 736,274 737,274 738,274 739,274 740,274 741,274 742,274 743,274 744,274 745,274 746,274 747,274 748,275 749,278 750,281 751,284 752,287 753,291 754,294 755,298 756,302 757,307 758,311 759,316 760,321 761,325 762,330 763,336 764,341 765,346 766,352 767,357 768,363 769,368 770,374 771,380 772,385 773,391 774,397 775,402 776,408 777,413 778,419 779,424 780,429 781,435 782,440 783,445 784,450 785,454 786,459 787,463 788,467 789,472 790,475 791,479 792,482 793,486 794,489 795,491 796,494 797,496 798,498 799,500 800,502 801,503 802,504 803,504 804,504 805,504 806,504 807,504 808,504 809,504 810,503 811,502 812,500 813,498 814,496 815,494 816,491 817,489 818,486 819,482 820,479 821,475 822,471 823,467 824,463 825,459 826,454 827,449 828,445 829,440 830,434 831,429 832,424 833,419 834,413 835,407 836,402 837,396 838,391 839,385 840,379 841,374 842,368 843,362 844,357 845,351 846,346 847,341 848,335 849,330 850,325 851,320 852,316 853,311 854,307 855,302 856,298 857,294 858,291 859,287 860,284 861,281 862,278 863,275 864,274 865,274 866,274 867,274 868,274 869,274 870,274 871,274 872,274 873,274 874,274 875,274 876,274 877,274 878,274 879,274 880,274 881,274 882,274 883,276 884,279 885,282 886,285 887,288 888,292 889,296 890,300 891,304 892,308 893,313 894,317 895,322 896,327 897,332 898,337 899,343 900,348 901,354 902,359 903,365 904,370 905,376 906,382 907,387 908,393 909,399 910,404 911,410 912,415 913,421 914,426 915,431 916,436 917,442 918,446 919,451 920,456 921,460 922,465 923,469 924,473 925,477 926,480 927,484 928,487 929,490 930,492 931,495 932,497 933,499 934,501 935,502 936,503 937,504 938,504 939,504 940,504 941,504 942,504 943,504 944,504 945,503 946,501 947,499 948,498 949,495 950,493 951,490 952,487 953,484 954,481 955,478 956,474 957,470 958,466 959,462 960,457 961,452 962,448 963,443 964,438 965,433 966,427 967,422 968,417 969,411 970,406 971,400 972,394 973,389 974,383 975,377 976,372 977,366 978,360 979,355 980,349 981,344 982,339 983,334 984,328 985,323 986,319 987,314 988,309 989,305 990,301 991,297 992,293 993,289 994,286 995,283 996,280 997,277 998,274 999,274 1000,274 1001,274 1002,274 1003,274 1004,274 1005,274 1006,274 1007,274 1008,274 1009,274 1010,274 1011,274 1012,274 1013,274 1014,274 1015,274 1016,274 1017,275 1018,277 1019,280 1020,283 1021,286 1022,290 1023,293 1024,297 1025,301 1026,305 1027,310 1028,314 1029,319 1030,324 1031,329 1032,334 1033,339 1034,345 1035,350 1036,355 1037,361 1038,367 1039,372 1040,378 1041,384 1042,389 1043,395 1044,401 1045,406 1046,412 1047,417 1048,423 1049,428 1050,433 1051,438 1052,443 1053,448 1054,453 1055,458 1056,462 1057,466 1058,470 1059,474 1060,478 1061,481 1062,485 1063,488 1064,491 1065,493 1066,496 1067,498 1068,500 1069,501 1070,503 1071,504 1072,504 1073,504 1074,504 1075,504 1076,504 1077,504 1078,504 1079,503 1080,502 1081,501 1082,499 1083,497 1084,495 1085,492 1086,489 1087,486 1088,483 1089,480 1090,476 1091,472 1092,469 1093,464 1094,460 1095,455 1096,451 1097,446 1098,441 1099,436 1100,431 1101,426 1102,420 1103,415 1104,409 1105,404 1106,398 1107,392 1108,387 1109,381 1110,375 1111,370 1112,364 1113,359 1114,353 1115,348 1116,342 1117,337 1118,332 1119,327 1120,322 1121,317 1122,312 1123,308 1124,304 1125,299 1126,295 1127,292 1128,288 1129,285 1130,282 1131,279 1132,276 1133,274 1134,274 1135,274 1136,274 1137,274 1138,274 1139,274 1140,274 1141,274 1142,274 1143,274 1144,274 1145,274 1146,274 1147,274 1148,274 1149,274 1150,274 1151,274 1152,275 1153,278 1154,281 1155,284 1156,287 1157,291 1158,295 1159,299 1160,303 1161,307 1162,311 1163,316 1164,321 1165,326 1166,331 1167,336 1168,341 1169,346 1170,352 1171,357 1172,363 1173,369 1174,374 1175,380 1176,386 1177,391 1178,397 1179,402 1180,408 1181,414 1182,419 1183,424 1184,430 1185,435 1186,440 1187,445 1188,450 1189,455 1190,459 1191,463 1192,468 1193,472 1194,476 1195,479 1196,483 1197,486 1198,489 1199,492 1200,494 1201,496 1202,498 1203,500 1204,502 1205,503 1206,504 1207,504 1208,504 1209,504 1210,504 1211,504 1212,504 1213,504 1214,503 1215,502 1216,500 1217,498 1218,496 1219,494 1220,491 1221,488 1222,485 1223,482 1224,479 1225,475 1226,471 1227,467 1228,463 1229,458 1230,454 1231,449 1232,444 1233,439 1234,434 1235,429 1236,424 1237,418 1238,413 1239,407 1240,402 1241,396 1242,390 1243,385 1244,379 1245,373 1246,368 1247,362 1248,357 1249,351 1250,346 1251,340 1252,335 1253,330 1254,325 1255,320 1256,315 1257,311 1258,306 1259,302 1260,298 1261,294 1262,290 1263,287 1264,284 1265,280 1266,278 1267,275 1268,274 1269,274 1270,274 1271,274 1272,274 1273,274 1274,274 1275,274 1276,274 1277,274 1278,274 1279,274 1280,274 1281,274 1282,274 1283,274 1284,274 1285,274 1286,274 1287,276 1288,279 1289,282 1290,285 1291,289 1292,292 1293,296 1294,300 1295,304 1296,308 1297,313 1298,318 1299,322 1300,327 1301,333 1302,338 1303,343 1304,348 1305,354 1306,359 1307,365 1308,371 1309,376 1310,382 1311,388 1312,393 1313,399 1314,404 1315,410 1316,416 1317,421 1318,426 1319,432 1320,437 1321,442 1322,447 1323,452 1324,456 1325,461 1326,465 1327,469 1328,473 1329,477 1330,480 1331,484 1332,487 1333,490 1334,492 1335,495 1336,497 1337,499 1338,501 1339,502 1340,503 1341,504 1342,504 1343,504 1344,504 1345,504 1346,504 1347,504 1348,504 1349,502 1350,501 1351,499 1352,497 1353,495 1354,493 1355,490 1356,487 1357,484 1358,481 1359,477 1360,474 1361,470 1362,466 1363,461 1364,457 1365,452 1366,447 1367,443 1368,438 1369,432 1370,427 1371,422 1372,416 1373,411 1374,405 1375,400 1376,394 1377,388 1378,383 1379,377 1380,371 1381,366 1382,360 1383,355 1384,349 1385,344 1386,338 1387,333 1388,328 1389,323 1390,318 1391,314 1392,309 1393,305 1394,301 1395,297 1396,293 1397,289 1398,286 1399,282 1400,279 1401,277 1402,274 1403,274 1404,274 1405,274 1406,274 1407,274 1408,274 1409,274 1410,274 1411,274 1412,274 1413,274 1414,274 1415,274 1416,274 1417,274 1418,274 1419,274 1420,274 1421,275 1422,277 1423,280 1424,283 1425,286 1426,290 1427,293 1428,297 1429,301 1430,306 1431,310 1432,315 1433,319 1434,324 1435,329 1436,334 1437,340 1438,345 1439,350 1440,356 1441,361 1442,367 1443,373 1444,378 1445,384 1446,389 1447,395 1448,401 1449,406 1450,412 1451,417 1452,423 1453,428 1454,433 1455,439 1456,444 1457,448 1458,453 1459,458 1460,462 1461,466 1462,471 1463,474 1464,478 1465,482 1466,485 1467,488 1468,491 1469,493 1470,496 1471,498 1472,500 1473,501 1474,503 1475,504 1476,504 1477,504 1478,504 1479,504 1480,504 1481,504 1482,504 1483,503 1484,502 1485,501 1486,499 1487,497 1488,494 1489,492 1490,489 1491,486 1492,483 1493,480 1494,476 1495,472 1496,468 1497,464 1498,460 1499,455 1500,451 1501,446 1502,441 1503,436 1504,431 1505,425 1506,420 1507,414 1508,409 1509,403 1510,398 1511,392 1512,386 1513,381 1514,375 1515,369 1516,364 1517,358 1518,353 1519,347 1520,342 1521,337 1522,331 1523,326 1524,322 1525,317 1526,312 1527,308 1528,303 1529,299 1530,295 1531,291 1532,288 1533,285 1534,281 1535,278 1536,276 1537,274 1538,274 1539,274 1540,274 1541,274 1542,274 1543,274 1544,274 1545,274 1546,274 1547,274 1548,274 1549,274 1550,274 1551,274 1552,274 1553,274 1554,274 1555,274 1556,276 1557,278 1558,281 1559,284 1560,288 1561,291 1562,295 1563,299 1564,303 1565,307 1566,312 1567,316 1568,321 1569,326 1570,331 1571,336 1572,341 1573,347 1574,352 1575,358 1576,363 1577,369 1578,374 1579,380 1580,386 1581,391 1582,397 1583,403" fill="none" stroke="#f4f430" stroke-width="1.25" stroke-linejoin="round" shape-rendering="crispEdges"/>
<polyline points="238,593 239,599 240,604 241,609 242,614 243,619 244,624 245,629 246,634 247,638 248,643 249,647 250,651 251,655 252,658 253,662 254,665 255,668 256,671 257,673 258,675 259,677 260,678 261,678 262,678 263,678 264,678 265,678 266,678 267,678 268,678 269,678 270,678 271,678 272,678 273,678 274,678 275,676 276,674 277,671 278,669 279,666 280,662 281,659 282,656 283,652 284,648 285,644 286,639 287,635 288,630 289,626 290,621 291,616 292,611 293,605 294,600 295,595 296,589 297,584 298,578 299,573 300,567 301,561 302,556 303,550 304,545 305,539 306,534 307,529 308,523 309,518 310,513 311,508 312,503 313,499 314,494 315,490 316,485 317,481 318,477 319,474 320,470 321,467 322,464 323,461 324,458 325,456 326,454 327,452 328,450 329,449 330,448 331,448 332,448 333,448 334,448 335,448 336,448 337,448 338,448 339,449 340,450 341,452 342,454 343,456 344,459 345,461 346,464 347,467 348,471 349,474 350,478 351,482 352,486 353,490 354,494 355,499 356,504 357,508 358,513 359,519 360,524 361,529 362,534 363,540 364,545 365,551 366,556 367,562 368,567 369,573 370,579 371,584 372,590 373,595 374,600 375,606 376,611 377,616 378,621 379,626 380,631 381,635 382,640 383,644 384,648 385,652 386,656 387,659 388,663 389,666 390,669 391,671 392,674 393,676 394,678 395,678 396,678 397,678 398,678 399,678 400,678 401,678 402,678 403,678 404,678 405,678 406,678 407,678 408,678 409,677 410,675 411,673 412,670 413,668 414,665 415,661 416,658 417,654 418,650 419,646 420,642 421,638 422,633 423,629 424,624 425,619 426,614 427,609 428,603 429,598 430,593 431,587 432,582 433,576 434,571 435,565 436,559 437,554 438,548 439,543 440,537 441,532 442,527 443,521 444,516 445,511 446,506 447,502 448,497 449,492 450,488 451,484 452,480 453,476 454,472 455,469 456,466 457,463 458,460 459,458 460,455 461,453 462,451 463,450 464,448 465,448 466,448 467,448 468,448 469,448 470,448 471,448 472,448 473,448 474,449 475,451 476,453 477,455 478,457 479,460 480,462 481,465 482,468 483,472 484,475 485,479 486,483 487,487 488,491 489,496 490,501 491,505 492,510 493,515 494,520 495,526 496,531 497,536 498,542 499,547 500,553 501,558 502,564 503,569 504,575 505,581 506,586 507,592 508,597 509,602 510,608 511,613 512,618 513,623 514,628 515,632 516,637 517,641 518,646 519,650 520,653 521,657 522,661 523,664 524,667 525,670 526,672 527,675 528,677 529,678 530,678 531,678 532,678 533,678 534,678 535,678 536,678 537,678 538,678 539,678 540,678 541,678 542,678 543,678 544,677 545,674 546,672 547,669 548,667 549,663 550,660 551,657 552,653 553,649 554,645 555,641 556,636 557,632 558,627 559,622 560,617 561,612 562,607 563,602 564,596 565,591 566,585 567,580 568,574 569,569 570,563 571,558 572,552 573,546 574,541 575,536 576,530 577,525 578,520 579,515 580,510 581,505 582,500 583,495 584,491 585,487 586,482 587,479 588,475 589,471 590,468 591,465 592,462 593,459 594,457 595,455 596,453 597,451 598,449 599,448 600,448 601,448 602,448 603,448 604,448 605,448 606,448 607,448 608,449 609,450 610,452 611,453 612,456 613,458 614,460 615,463 616,466 617,469 618,473 619,477 620,480 621,484 622,489 623,493 624,498 625,502 626,507 627,512 628,517 629,522 630,527 631,533 632,538 633,544 634,549 635,555 636,560 637,566 638,571 639,577 640,582 641,588 642,593 643,599 644,604 645,609 646,615 647,620 648,624 649,629 650,634 651,638 652,643 653,647 654,651 655,655 656,658 657,662 658,665 659,668 660,671 661,673 662,676 663,678 664,678 665,678 666,678 667,678 668,678 669,678 670,678 671,678 672,678 673,678 674,678 675,678 676,678 677,678 678,678 679,676 680,674 681,671 682,668 683,665 684,662 685,659 686,655 687,652 688,648 689,643 690,639 691,635 692,630 693,625 694,620 695,615 696,610 697,605 698,600 699,594 700,589 701,583 702,578 703,572 704,567 705,561 706,556 707,550 708,545 709,539 710,534 711,528 712,523 713,518 714,513 715,508 716,503 717,498 718,494 719,489 720,485 721,481 722,477 723,474 724,470 725,467 726,464 727,461 728,458 729,456 730,454 731,452 732,450 733,449 734,448 735,448 736,448 737,448 738,448 739,448 740,448 741,448 742,448 743,449 744,451 745,452 746,454 747,456 748,459 749,461 750,464 751,467 752,471 753,474 754,478 755,482 756,486 757,490 758,495 759,499 760,504 761,509 762,514 763,519 764,524 765,529 766,535 767,540 768,546 769,551 770,557 771,562 772,568 773,573 774,579 775,584 776,590 777,595 778,601 779,606 780,611 781,616 782,621 783,626 784,631 785,636 786,640 787,644 788,648 789,652 790,656 791,660 792,663 793,666 794,669 795,672 796,674 797,676 798,678 799,678 800,678 801,678 802,678 803,678 804,678 805,678 806,678 807,678 808,678 809,678 810,678 811,678 812,678 813,677 814,675 815,673 816,670 817,667 818,664 819,661 820,658 821,654 822,650 823,646 824,642 825,638 826,633 827,628 828,624 829,619 830,614 831,608 832,603 833,598 834,592 835,587 836,581 837,576 838,570 839,565 840,559 841,554 842,548 843,543 844,537 845,532 846,526 847,521 848,516 849,511 850,506 851,501 852,497 853,492 854,488 855,484 856,480 857,476 858,472 859,469 860,466 861,463 862,460 863,457 864,455 865,453 866,451 867,450 868,448 869,448 870,448 871,448 872,448 873,448 874,448 875,448 876,448 877,448 878,450 879,451 880,453 881,455 882,457 883,460 884,462 885,465 886,468 887,472 888,475 889,479 890,483 891,487 892,492 893,496 894,501 895,506 896,510 897,515 898,521 899,526 900,531 901,537 902,542 903,547 904,553 905,559 906,564 907,570 908,575 909,581 910,586 911,592 912,597 913,603 914,608 915,613 916,618 917,623 918,628 919,633 920,637 921,641 922,646 923,650 924,654 925,657 926,661 927,664 928,667 929,670 930,673 931,675 932,677 933,678 934,678 935,678 936,678 937,678 938,678 939,678 940,678 941,678 942,678 943,678 944,678 945,678 946,678 947,678 948,677 949,674 950,672 951,669 952,666 953,663 954,660 955,656 956,653 957,649 958,645 959,640 960,636 961,631 962,627 963,622 964,617 965,612 966,607 967,601 968,596 969,591 970,585 971,580 972,574 973,568 974,563 975,557 976,552 977,546 978,541 979,535 980,530 981,525 982,519 983,514 984,509 985,504 986,500 987,495 988,491 989,486 990,482 991,478 992,475 993,471 994,468 995,465 996,462 997,459 998,457 999,454 1000,452 1001,451 1002,449 1003,448 1004,448 1005,448 1006,448 1007,448 1008,448 1009,448 1010,448 1011,448 1012,449 1013,450 1014,452 1015,454 1016,456 1017,458 1018,461 1019,463 1020,466 1021,470 1022,473 1023,477 1024,481 1025,485 1026,489 1027,493 1028,498 1029,502 1030,507 1031,512 1032,517 1033,522 1034,528 1035,533 1036,538 1037,544 1038,549 1039,555 1040,561 1041,566 1042,572 1043,577 1044,583 1045,588 1046,594 1047,599 1048,604 1049,610 1050,615 1051,620 1052,625 1053,630 1054,634 1055,639 1056,643 1057,647 1058,651 1059,655 1060,659 1061,662 1062,665 1063,668 1064,671 1065,673 1066,676 1067,678 1068,678 1069,678 1070,678 1071,678 1072,678 1073,678 1074,678 1075,678 1076,678 1077,678 1078,678 1079,678 1080,678 1081,678 1082,678 1083,676 1084,674 1085,671 1086,668 1087,665 1088,662 1089,659 1090,655 1091,651 1092,647 1093,643 1094,639 1095,634 1096,630 1097,625 1098,620 1099,615 1100,610 1101,605 1102,599 1103,594 1104,589 1105,583 1106,578 1107,572 1108,566 1109,561 1110,555 1111,550 1112,544 1113,539 1114,533 1115,528 1116,523 1117,518 1118,513 1119,508 1120,503 1121,498 1122,494 1123,489 1124,485 1125,481 1126,477 1127,473 1128,470 1129,467 1130,464 1131,461 1132,458 1133,456 1134,454 1135,452 1136,450 1137,449 1138,448 1139,448 1140,448 1141,448 1142,448 1143,448 1144,448 1145,448 1146,448 1147,449 1148,451 1149,452 1150,454 1151,456 1152,459 1153,462 1154,464 1155,468 1156,471 1157,474 1158,478 1159,482 1160,486 1161,490 1162,495 1163,499 1164,504 1165,509 1166,514 1167,519 1168,524 1169,530 1170,535 1171,540 1172,546 1173,551 1174,557 1175,562 1176,568 1177,574 1178,579 1179,585 1180,590 1181,596 1182,601 1183,606 1184,611 1185,617 1186,622 1187,626 1188,631 1189,636 1190,640 1191,644 1192,649 1193,652 1194,656 1195,660 1196,663 1197,666 1198,669 1199,672 1200,674 1201,676 1202,678 1203,678 1204,678 1205,678 1206,678 1207,678 1208,678 1209,678 1210,678 1211,678 1212,678 1213,678 1214,678 1215,678 1216,678 1217,677 1218,675 1219,673 1220,670 1221,667 1222,664 1223,661 1224,658 1225,654 1226,650 1227,646 1228,642 1229,637 1230,633 1231,628 1232,623 1233,618 1234,613 1235,608 1236,603 1237,598 1238,592 1239,587 1240,581 1241,576 1242,570 1243,565 1244,559 1245,553 1246,548 1247,542 1248,537 1249,531 1250,526 1251,521 1252,516 1253,511 1254,506 1255,501 1256,496 1257,492 1258,488 1259,483 1260,480 1261,476 1262,472 1263,469 1264,466 1265,463 1266,460 1267,457 1268,455 1269,453 1270,451 1271,450 1272,448 1273,448 1274,448 1275,448 1276,448 1277,448 1278,448 1279,448 1280,448 1281,448 1282,450 1283,451 1284,453 1285,455 1286,457 1287,460 1288,463 1289,465 1290,469 1291,472 1292,476 1293,479 1294,483 1295,488 1296,492 1297,496 1298,501 1299,506 1300,511 1301,516 1302,521 1303,526 1304,531 1305,537 1306,542 1307,548 1308,553 1309,559 1310,564 1311,570 1312,576 1313,581 1314,587 1315,592 1316,598 1317,603 1318,608 1319,613 1320,618 1321,623 1322,628 1323,633 1324,637 1325,642 1326,646 1327,650 1328,654 1329,657 1330,661 1331,664 1332,667 1333,670 1334,673 1335,675 1336,677 1337,678 1338,678 1339,678 1340,678 1341,678 1342,678 1343,678 1344,678 1345,678 1346,678 1347,678 1348,678 1349,678 1350,678 1351,678 1352,676 1353,674 1354,672 1355,669 1356,666 1357,663 1358,660 1359,656 1360,653 1361,649 1362,645 1363,640 1364,636 1365,631 1366,627 1367,622 1368,617 1369,612 1370,606 1371,601 1372,596 1373,590 1374,585 1375,579 1376,574 1377,568 1378,563 1379,557 1380,551 1381,546 1382,540 1383,535 1384,530 1385,524 1386,519 1387,514 1388,509 1389,504 1390,499 1391,495 1392,490 1393,486 1394,482 1395,478 1396,474 1397,471 1398,468 1399,464 1400,462 1401,459 1402,456 1403,454 1404,452 1405,451 1406,449 1407,448 1408,448 1409,448 1410,448 1411,448 1412,448 1413,448 1414,448 1415,448 1416,449 1417,450 1418,452 1419,454 1420,456 1421,458 1422,461 1423,464 1424,467 1425,470 1426,473 1427,477 1428,481 1429,485 1430,489 1431,493 1432,498 1433,503 1434,507 1435,512 1436,517 1437,523 1438,528 1439,533 1440,539 1441,544 1442,550 1443,555 1444,561 1445,566 1446,572 1447,578 1448,583 1449,589 1450,594 1451,599 1452,605 1453,610 1454,615 1455,620 1456,625 1457,630 1458,634 1459,639 1460,643 1461,647 1462,651 1463,655 1464,659 1465,662 1466,665 1467,668 1468,671 1469,673 1470,676 1471,678 1472,678 1473,678 1474,678 1475,678 1476,678 1477,678 1478,678 1479,678 1480,678 1481,678 1482,678 1483,678 1484,678 1485,678 1486,678 1487,676 1488,673 1489,671 1490,668 1491,665 1492,662 1493,659 1494,655 1495,651 1496,647 1497,643 1498,639 1499,634 1500,630 1501,625 1502,620 1503,615 1504,610 1505,605 1506,599 1507,594 1508,588 1509,583 1510,577 1511,572 1512,566 1513,561 1514,555 1515,549 1516,544 1517,539 1518,533 1519,528 1520,523 1521,517 1522,512 1523,507 1524,503 1525,498 1526,493 1527,489 1528,485 1529,481 1530,477 1531,473 1532,470 1533,466 1534,463 1535,461 1536,458 1537,456 1538,454 1539,452 1540,450 1541,449 1542,448 1543,448 1544,448 1545,448 1546,448 1547,448 1548,448 1549,448 1550,448 1551,449 1552,451 1553,452 1554,454 1555,457 1556,459 1557,462 1558,465 1559,468 1560,471 1561,475 1562,478 1563,482 1564,486 1565,491 1566,495 1567,500 1568,504 1569,509 1570,514 1571,519 1572,524 1573,530 1574,535 1575,541 1576,546 1577,552 1578,557 1579,563 1580,568 1581,574 1582,579 1583,585" fill="none" stroke="#38e038" stroke-width="1.25" stroke-linejoin="round" shape-rendering="crispEdges"/></svg>
<svg width="1920" height="1039" style="left:0;top:0"><path d="M218 467.5H229.5L235.5 473.5L229.5 481H218z" fill="#14f014" stroke="#0a4a0a" stroke-width="0.6"/><path d="M218 468.2H229.2L231.2 470.2H218z" fill="#e8f020"/><path d="M1605 468H1595L1588.5 473.5L1595 479.5H1605z" fill="#f4f400" stroke="#8a8a00" stroke-width="0.6"/></svg>
<div class="t" style="left:222.8px;top:470.27px;font-size:11.5px;line-height:11.5px;font-weight:bold;color:#000">2</div>
<div class="t" style="left:1594.5px;top:469.19px;font-size:11px;line-height:11px;color:#000;font-weight:bold">T</div>
<div class="a" style="left:237px;top:791px;width:92px;height:19px;background:#000"></div>
<div class="t" style="left:239.6px;top:794.64px;font-size:12px;line-height:12px;color:#e8f060">CH1</div>
<svg width="14" height="8" style="left:266px;top:798px"><path d="M1 1.5h1M4.5 1.5h1M8 1.5h1M11 1.5h1" stroke="#e8f060" stroke-width="1.2"/><path d="M0.5 5.3h11" stroke="#e8f060" stroke-width="1.4"/></svg>
<div class="t" style="left:287.6px;top:794.64px;font-size:12px;line-height:12px;color:#e8f060">20.0V</div>
<div class="a" style="left:377px;top:791px;width:92px;height:19px;background:#000"></div>
<div class="t" style="left:379.6px;top:794.64px;font-size:12px;line-height:12px;color:#33e033">CH2</div>
<svg width="14" height="8" style="left:406px;top:798px"><path d="M1 1.5h1M4.5 1.5h1M8 1.5h1M11 1.5h1" stroke="#33e033" stroke-width="1.2"/><path d="M0.5 5.3h11" stroke="#33e033" stroke-width="1.4"/></svg>
<div class="t" style="left:427.6px;top:794.64px;font-size:12px;line-height:12px;color:#33e033">20.0V</div>
<div class="a" style="left:1372px;top:791px;width:213px;height:19px;background:#000"></div>
<div class="t" style="left:1374.3px;top:794.84px;font-size:12px;line-height:12px;color:#f08a2a">Time: 20.00ms</div>
<div class="t" style="left:1475.3px;top:794.84px;font-size:12px;line-height:12px;color:#f08a2a">Sample Rate: 1MHz</div>
<div class="a" style="left:1611px;top:81px;width:5px;height:738px;background:#f7f8fb"></div>
<div class="a" style="left:1616px;top:81px;width:304px;height:20px;background:linear-gradient(#c3d1de,#d4dfea);border-bottom:1px solid #e6edf5"></div>
<div class="t" style="left:1620.4px;top:85.14px;font-size:12px;line-height:12px;">Control Panel</div>
<svg width="30" height="12" style="left:1885px;top:86px"><path d="M4 1.5h5M5 1.5v5M8 1.5v5M3 6.5h7M6.5 6.5v4" fill="none" stroke="#000" stroke-width="1.2"/><path d="M20.8 0.8L27.7 7.7M27.7 0.8L20.8 7.7" stroke="#000" stroke-width="1.6"/></svg>
<div class="a" style="left:1616px;top:101px;width:304px;height:23px;background:#e1e1e1;border-top:1px solid #a6a6a6;border-bottom:1px solid #a6a6a6;border-left:1px solid #a6a6a6"></div>
<div class="t" style="left:1620.4px;top:106.84px;font-size:12px;line-height:12px;">Scope</div>
<svg width="12" height="8" style="left:1905px;top:109px"><path d="M1 1.5L5 5.5L9 1.5" fill="none" stroke="#555" stroke-width="1.1"/></svg>
<div class="a" style="left:1616px;top:124px;width:304px;height:24px;background:linear-gradient(#f6f8fd 0px,#f3f6fd 6px,#dfe2ee 13px,#c9cddc 19px,#b4b8c9 23px);border-bottom:1px solid #a8aab4"></div>
<div class="a" style="left:1903px;top:148px;width:17px;height:671px;background:#f0f0f0"></div>
<div class="a" style="left:1905px;top:165px;width:13px;height:537px;background:#cdcdcd"></div>
<svg width="12" height="8" style="left:1906px;top:154px"><path d="M1.5 5.5L5.5 1.5L9.5 5.5" fill="none" stroke="#606060" stroke-width="1.3"/></svg>
<svg width="12" height="8" style="left:1906px;top:807px"><path d="M1.5 1.5L5.5 5.5L9.5 1.5" fill="none" stroke="#606060" stroke-width="1.3"/></svg>
<div class="a" style="left:1621px;top:160px;width:202px;height:117px;border:1px solid #dcdcdc;box-shadow:inset 1px 1px 0 #fff, 1px 1px 0 #fff"></div>
<div class="a" style="left:1696px;top:157px;width:68px;height:6px;background:#f0f0f0"></div>
<div class="t" style="left:1699px;top:154.29px;font-size:11px;line-height:11px;color:#000">Horizontal</div>
<div class="t" style="left:1631.5px;top:174.81px;font-size:10.5px;line-height:10.5px;">Time/DIV</div>
<div class="a" style="left:1630px;top:192px;width:74px;height:22px;background:#e1e1e1;border:1px solid #adadad"></div>
<div class="t" style="left:1634.5px;top:197.91px;font-size:10.5px;line-height:10.5px;color:#000">20.00ms</div>
<svg width="12" height="8" style="left:1690px;top:201px"><path d="M1 1.5L5 5.5L9 1.5" fill="none" stroke="#555" stroke-width="1.1"/></svg>
<div class="t" style="left:1631.5px;top:225.11px;font-size:10.5px;line-height:10.5px;">Format</div>
<div class="a" style="left:1630px;top:244px;width:74px;height:22px;background:#e1e1e1;border:1px solid #adadad"></div>
<div class="t" style="left:1634.5px;top:249.91px;font-size:10.5px;line-height:10.5px;color:#000">Y-T</div>
<svg width="12" height="8" style="left:1690px;top:253px"><path d="M1 1.5L5 5.5L9 1.5" fill="none" stroke="#555" stroke-width="1.1"/></svg>
<svg width="90" height="90" style="left:1719px;top:180px"><g transform="translate(45 45)"><path d="M-25.10 25.10A35.5 35.5 0 1 1 25.10 25.10" fill="none" stroke="#ffffff" stroke-width="2.6"/><path d="M-26.16 26.16A37 37 0 1 1 26.16 26.16" fill="none" stroke="#111" stroke-width="1"/><circle r="33.6" fill="#c6c6c6" stroke="#222" stroke-width="1"/><circle r="28.6" fill="#0000c8" stroke="#222" stroke-width="0.7"/><path d="M-21 21L-31.5 30.5M21 21L31.5 30.5" stroke="#111" stroke-width="1.2"/><path d="M22 -21L19.5 -18.5" stroke="#222" stroke-width="1"/><path d="M-7 -22.5L-1.7 -5" stroke="#fff" stroke-width="1.5"/></g></svg>
<div class="a" style="left:1621px;top:297px;width:202px;height:283px;border:1px solid #dcdcdc;box-shadow:inset 1px 1px 0 #fff, 1px 1px 0 #fff"></div>
<div class="a" style="left:1702px;top:294px;width:55px;height:6px;background:#f0f0f0"></div>
<div class="t" style="left:1705px;top:291.29px;font-size:11px;line-height:11px;color:#000">Vertical</div>
<svg width="14" height="14" style="left:1630px;top:314px"><rect x="0.5" y="0.5" width="12" height="12" fill="#fff" stroke="#333" stroke-width="1"/><path d="M2.5 6.5l3 3l5-6" fill="none" stroke="#333" stroke-width="1.3"/></svg>
<div class="t" style="left:1646.3px;top:316.61px;font-size:10.5px;line-height:10.5px;">CH1</div>
<div class="a" style="left:1630px;top:335px;width:74px;height:22px;background:#e1e1e1;border:1px solid #adadad"></div>
<div class="t" style="left:1634.5px;top:340.91px;font-size:10.5px;line-height:10.5px;color:#000">20.0V</div>
<svg width="12" height="8" style="left:1690px;top:344px"><path d="M1 1.5L5 5.5L9 1.5" fill="none" stroke="#555" stroke-width="1.1"/></svg>
<div class="a" style="left:1630px;top:370px;width:74px;height:22px;background:#cccccc;border:1px solid #bfbfbf"></div>
<div class="t" style="left:1634.5px;top:375.91px;font-size:10.5px;line-height:10.5px;color:#8a8a8a">DC</div>
<svg width="12" height="8" style="left:1690px;top:379px"><path d="M1 1.5L5 5.5L9 1.5" fill="none" stroke="#aaa" stroke-width="1.1"/></svg>
<div class="a" style="left:1630px;top:405px;width:74px;height:22px;background:#e1e1e1;border:1px solid #adadad"></div>
<div class="t" style="left:1634.5px;top:410.91px;font-size:10.5px;line-height:10.5px;color:#000">x10</div>
<svg width="12" height="8" style="left:1690px;top:414px"><path d="M1 1.5L5 5.5L9 1.5" fill="none" stroke="#555" stroke-width="1.1"/></svg>
<svg width="90" height="90" style="left:1719px;top:315px"><g transform="translate(45 45)"><path d="M-25.10 25.10A35.5 35.5 0 1 1 25.10 25.10" fill="none" stroke="#ffffff" stroke-width="2.6"/><path d="M-26.16 26.16A37 37 0 1 1 26.16 26.16" fill="none" stroke="#111" stroke-width="1"/><circle r="33.6" fill="#c6c6c6" stroke="#222" stroke-width="1"/><circle r="28.6" fill="#ffff00" stroke="#222" stroke-width="0.7"/><path d="M-21 21L-31.5 30.5M21 21L31.5 30.5" stroke="#111" stroke-width="1.2"/><path d="M22 -21L19.5 -18.5" stroke="#222" stroke-width="1"/><path d="M-17 -0.5H-6" stroke="#e6e6a0" stroke-width="1.5"/></g></svg>
<svg width="14" height="14" style="left:1741px;top:412px"><rect x="0.5" y="0.5" width="12" height="12" fill="#fff" stroke="#333" stroke-width="1"/></svg>
<div class="t" style="left:1757px;top:414.61px;font-size:10.5px;line-height:10.5px;">Invert</div>
<svg width="14" height="14" style="left:1630px;top:454px"><rect x="0.5" y="0.5" width="12" height="12" fill="#fff" stroke="#333" stroke-width="1"/><path d="M2.5 6.5l3 3l5-6" fill="none" stroke="#333" stroke-width="1.3"/></svg>
<div class="t" style="left:1646.3px;top:456.61px;font-size:10.5px;line-height:10.5px;">CH2</div>
<div class="a" style="left:1630px;top:475px;width:74px;height:22px;background:#e1e1e1;border:1px solid #adadad"></div>
<div class="t" style="left:1634.5px;top:480.91px;font-size:10.5px;line-height:10.5px;color:#000">20.0V</div>
<svg width="12" height="8" style="left:1690px;top:484px"><path d="M1 1.5L5 5.5L9 1.5" fill="none" stroke="#555" stroke-width="1.1"/></svg>
<div class="a" style="left:1630px;top:510px;width:74px;height:22px;background:#cccccc;border:1px solid #bfbfbf"></div>
<div class="t" style="left:1634.5px;top:515.91px;font-size:10.5px;line-height:10.5px;color:#8a8a8a">DC</div>
<svg width="12" height="8" style="left:1690px;top:519px"><path d="M1 1.5L5 5.5L9 1.5" fill="none" stroke="#aaa" stroke-width="1.1"/></svg>
<div class="a" style="left:1630px;top:545px;width:74px;height:22px;background:#e1e1e1;border:1px solid #adadad"></div>
<div class="t" style="left:1634.5px;top:550.91px;font-size:10.5px;line-height:10.5px;color:#000">x10</div>
<svg width="12" height="8" style="left:1690px;top:554px"><path d="M1 1.5L5 5.5L9 1.5" fill="none" stroke="#555" stroke-width="1.1"/></svg>
<svg width="90" height="90" style="left:1719px;top:457px"><g transform="translate(45 45)"><path d="M-25.10 25.10A35.5 35.5 0 1 1 25.10 25.10" fill="none" stroke="#ffffff" stroke-width="2.6"/><path d="M-26.16 26.16A37 37 0 1 1 26.16 26.16" fill="none" stroke="#111" stroke-width="1"/><circle r="33.6" fill="#c6c6c6" stroke="#222" stroke-width="1"/><circle r="28.6" fill="#00e000" stroke="#222" stroke-width="0.7"/><path d="M-21 21L-31.5 30.5M21 21L31.5 30.5" stroke="#111" stroke-width="1.2"/><path d="M22 -21L19.5 -18.5" stroke="#222" stroke-width="1"/><path d="M-17 -1H-6" stroke="#b0f0b0" stroke-width="1.5"/></g></svg>
<svg width="14" height="14" style="left:1741px;top:552px"><rect x="0.5" y="0.5" width="12" height="12" fill="#fff" stroke="#333" stroke-width="1"/></svg>
<div class="t" style="left:1757px;top:554.61px;font-size:10.5px;line-height:10.5px;">Invert</div>
<div class="a" style="left:1621px;top:600px;width:202px;height:162px;border:1px solid #dcdcdc;box-shadow:inset 1px 1px 0 #fff, 1px 1px 0 #fff"></div>
<div class="a" style="left:1703px;top:597px;width:49px;height:6px;background:#f0f0f0"></div>
<div class="t" style="left:1706px;top:594.29px;font-size:11px;line-height:11px;color:#000">Trigger</div>
<div class="t" style="left:1633.8px;top:627.41px;font-size:10.5px;line-height:10.5px;">Trigger Mode</div>
<div class="a" style="left:1730px;top:622px;width:74px;height:22px;background:#e1e1e1;border:1px solid #adadad"></div>
<div class="t" style="left:1734.5px;top:627.91px;font-size:10.5px;line-height:10.5px;color:#000">Edge</div>
<svg width="12" height="8" style="left:1790px;top:631px"><path d="M1 1.5L5 5.5L9 1.5" fill="none" stroke="#555" stroke-width="1.1"/></svg>
<div class="t" style="left:1633.8px;top:662.41px;font-size:10.5px;line-height:10.5px;">Trigger Sweep</div>
<div class="a" style="left:1730px;top:657px;width:74px;height:22px;background:#e1e1e1;border:1px solid #adadad"></div>
<div class="t" style="left:1734.5px;top:662.91px;font-size:10.5px;line-height:10.5px;color:#000">AUTO</div>
<svg width="12" height="8" style="left:1790px;top:666px"><path d="M1 1.5L5 5.5L9 1.5" fill="none" stroke="#555" stroke-width="1.1"/></svg>
<div class="t" style="left:1633.8px;top:697.41px;font-size:10.5px;line-height:10.5px;">Trigger Source</div>
<div class="a" style="left:1730px;top:692px;width:74px;height:22px;background:#e1e1e1;border:1px solid #adadad"></div>
<div class="t" style="left:1734.5px;top:697.91px;font-size:10.5px;line-height:10.5px;color:#000">CH1</div>
<svg width="12" height="8" style="left:1790px;top:701px"><path d="M1 1.5L5 5.5L9 1.5" fill="none" stroke="#555" stroke-width="1.1"/></svg>
<div class="t" style="left:1633.8px;top:732.41px;font-size:10.5px;line-height:10.5px;">Trigger Slope</div>
<div class="a" style="left:1730px;top:727px;width:74px;height:22px;background:#e1e1e1;border:1px solid #adadad"></div>
<div class="t" style="left:1734.5px;top:732.91px;font-size:10.5px;line-height:10.5px;color:#000">+</div>
<svg width="12" height="8" style="left:1790px;top:736px"><path d="M1 1.5L5 5.5L9 1.5" fill="none" stroke="#555" stroke-width="1.1"/></svg>
<div class="a" style="left:0;top:81px;width:209px;height:20px;background:linear-gradient(#c3d1de,#d4dfea);border-bottom:1px solid #e6edf5"></div>
<div class="t" style="left:4px;top:85.14px;font-size:12px;line-height:12px;">Measure</div>
<svg width="10" height="10" style="left:196px;top:87px"><path d="M0.8 0.8L7.7 7.7M7.7 0.8L0.8 7.7" stroke="#000" stroke-width="1.6"/></svg>
<div class="a" style="left:0;top:101px;width:209px;height:23px;background:#e1e1e1;border-top:1px solid #a6a6a6;border-bottom:1px solid #a6a6a6"></div>
<div class="t" style="left:4px;top:106.84px;font-size:12px;line-height:12px;">CH1</div>
<svg width="12" height="8" style="left:196px;top:109px"><path d="M1 1.5L5 5.5L9 1.5" fill="none" stroke="#555" stroke-width="1.1"/></svg>
<div class="a" style="left:0;top:124px;width:209px;height:25px;background:linear-gradient(#f6f8fd 0px,#f3f6fd 6px,#dfe2ee 13px,#c9cddc 19px,#b4b8c9 24px);border-bottom:1px solid #9a9aa2"></div>
<div class="a" style="left:0;top:149px;width:210px;height:870px;background:#fff;border-left:1px solid #a0a0a0;border-right:1px solid #a0a0a0;border-bottom:1px solid #a0a0a0"></div>
<div class="t" style="left:57.5px;top:151.74px;font-size:12px;line-height:12px;font-weight:bold">Type</div>
<div class="t" style="left:76.2px;top:169.74px;font-size:12px;line-height:12px;">Vertical</div>
<div class="t" style="left:95.3px;top:187.74px;font-size:12px;line-height:12px;">Maximum</div>
<div class="t" style="left:95.3px;top:205.74px;font-size:12px;line-height:12px;">Minimum</div>
<div class="t" style="left:95.3px;top:223.74px;font-size:12px;line-height:12px;">Peak to Peak</div>
<div class="t" style="left:95.3px;top:241.74px;font-size:12px;line-height:12px;">Top</div>
<div class="t" style="left:95.3px;top:259.74px;font-size:12px;line-height:12px;">Base</div>
<div class="t" style="left:95.3px;top:277.74px;font-size:12px;line-height:12px;">Middle</div>
<div class="t" style="left:95.3px;top:295.74px;font-size:12px;line-height:12px;">RMS</div>
<div class="t" style="left:95.3px;top:313.74px;font-size:12px;line-height:12px;">Amplitude</div>
<div class="t" style="left:95.3px;top:331.74px;font-size:12px;line-height:12px;">Mean</div>
<div class="t" style="left:95.3px;top:349.74px;font-size:12px;line-height:12px;">Cycle Mean</div>
<div class="t" style="left:95.3px;top:367.74px;font-size:12px;line-height:12px;">Positive Overshoot</div>
<div class="t" style="left:95.3px;top:385.74px;font-size:12px;line-height:12px;">Negative Overshoot</div>
<div class="t" style="left:76.2px;top:403.74px;font-size:12px;line-height:12px;">Horizontal</div>
<div class="t" style="left:95.3px;top:421.74px;font-size:12px;line-height:12px;">Period</div>
<div class="t" style="left:95.3px;top:439.74px;font-size:12px;line-height:12px;">Frequency</div>
<div class="t" style="left:95.3px;top:457.74px;font-size:12px;line-height:12px;">Rise Time</div>
<div class="t" style="left:95.3px;top:475.74px;font-size:12px;line-height:12px;">Fall Time</div>
<div class="t" style="left:95.3px;top:493.74px;font-size:12px;line-height:12px;">+ Duty Cycle</div>
<div class="t" style="left:95.3px;top:511.74px;font-size:12px;line-height:12px;">- Duty Cycle</div>
<div class="t" style="left:95.3px;top:529.74px;font-size:12px;line-height:12px;">+ Pulse Width</div>
<div class="t" style="left:95.3px;top:547.74px;font-size:12px;line-height:12px;">- Pulse Width</div>
<svg width="210" height="600" style="left:0;top:0">
<defs><linearGradient id="mb" x1="0" y1="0" x2="0" y2="1"><stop offset="0" stop-color="#fafafa"/><stop offset="1" stop-color="#c8c8c8"/></linearGradient>
<linearGradient id="dia" x1="0" y1="0" x2="1" y2="1"><stop offset="0" stop-color="#f4b8f4"/><stop offset="1" stop-color="#b050b8"/></linearGradient></defs>
<rect x="8.5" y="155.5" width="8" height="8" fill="url(#mb)" stroke="#a8a8a8" stroke-width="1" rx="1"/><rect x="10" y="159" width="5" height="1" fill="#333"/>
<rect x="23.5" y="151.5" width="12" height="12" fill="#fff" stroke="#222" stroke-width="1"/>
<rect x="44" y="150" width="8" height="13" fill="#2848b0"/><rect x="45" y="153" width="6" height="9" fill="#d8e4f4"/><path d="M41 151v5M38.5 153.5h5" stroke="#f0c020" stroke-width="2"/><rect x="38.5" y="156.5" width="8" height="8" fill="#cfdcf4" stroke="#5070a8" stroke-width="1"/><path d="M40 159h5M40 161h5" stroke="#5070a8" stroke-width="1"/>
<rect x="27.5" y="172.5" width="8" height="8" fill="url(#mb)" stroke="#a8a8a8" stroke-width="1" rx="1"/><rect x="29" y="176" width="5" height="1" fill="#333"/>
<rect x="42.5" y="169.5" width="12" height="12" fill="#fff" stroke="#222" stroke-width="1"/>
<path d="M56 172.0l4.5-4.5l4.5 4.5l-4.5 4.5z" fill="#e8c840" stroke="#a08020" stroke-width="0.6"/>
<path d="M65 173.0l3.5-3.5l3.5 3.5l-3.5 3.5z" fill="#e070e0"/>
<path d="M65 180.0l3.5-3.5l3.5 3.5l-3.5 3.5z" fill="#70a0e0"/>
<path d="M62.5 175.0v6h3" fill="none" stroke="#778" stroke-width="1"/>
<rect x="61.5" y="187.5" width="12" height="12" fill="#fff" stroke="#222" stroke-width="1"/>
<path d="M63.5 193.5l3 3.2l5.5-6.5" fill="none" stroke="#333" stroke-width="1.3"/>
<path d="M85 187.0l4 4.5v2.5l-4 4l-4-4v-2.5z" fill="url(#dia)"/><path d="M81 191.5l4 2.5l4-2.5M85 194.0v4" fill="none" stroke="#fbe4fb" stroke-width="0.7"/>
<rect x="61.5" y="205.5" width="12" height="12" fill="#fff" stroke="#222" stroke-width="1"/>
<path d="M63.5 211.5l3 3.2l5.5-6.5" fill="none" stroke="#333" stroke-width="1.3"/>
<path d="M85 205.0l4 4.5v2.5l-4 4l-4-4v-2.5z" fill="url(#dia)"/><path d="M81 209.5l4 2.5l4-2.5M85 212.0v4" fill="none" stroke="#fbe4fb" stroke-width="0.7"/>
<rect x="61.5" y="223.5" width="12" height="12" fill="#fff" stroke="#222" stroke-width="1"/>
<path d="M85 223.0l4 4.5v2.5l-4 4l-4-4v-2.5z" fill="url(#dia)"/><path d="M81 227.5l4 2.5l4-2.5M85 230.0v4" fill="none" stroke="#fbe4fb" stroke-width="0.7"/>
<rect x="61.5" y="241.5" width="12" height="12" fill="#fff" stroke="#222" stroke-width="1"/>
<path d="M63.5 247.5l3 3.2l5.5-6.5" fill="none" stroke="#333" stroke-width="1.3"/>
<path d="M85 241.0l4 4.5v2.5l-4 4l-4-4v-2.5z" fill="url(#dia)"/><path d="M81 245.5l4 2.5l4-2.5M85 248.0v4" fill="none" stroke="#fbe4fb" stroke-width="0.7"/>
<rect x="61.5" y="259.5" width="12" height="12" fill="#fff" stroke="#222" stroke-width="1"/>
<path d="M85 259.0l4 4.5v2.5l-4 4l-4-4v-2.5z" fill="url(#dia)"/><path d="M81 263.5l4 2.5l4-2.5M85 266.0v4" fill="none" stroke="#fbe4fb" stroke-width="0.7"/>
<rect x="61.5" y="277.5" width="12" height="12" fill="#fff" stroke="#222" stroke-width="1"/>
<path d="M85 277.0l4 4.5v2.5l-4 4l-4-4v-2.5z" fill="url(#dia)"/><path d="M81 281.5l4 2.5l4-2.5M85 284.0v4" fill="none" stroke="#fbe4fb" stroke-width="0.7"/>
<rect x="61.5" y="295.5" width="12" height="12" fill="#fff" stroke="#222" stroke-width="1"/>
<path d="M63.5 301.5l3 3.2l5.5-6.5" fill="none" stroke="#333" stroke-width="1.3"/>
<path d="M85 295.0l4 4.5v2.5l-4 4l-4-4v-2.5z" fill="url(#dia)"/><path d="M81 299.5l4 2.5l4-2.5M85 302.0v4" fill="none" stroke="#fbe4fb" stroke-width="0.7"/>
<rect x="61.5" y="313.5" width="12" height="12" fill="#fff" stroke="#222" stroke-width="1"/>
<path d="M63.5 319.5l3 3.2l5.5-6.5" fill="none" stroke="#333" stroke-width="1.3"/>
<path d="M85 313.0l4 4.5v2.5l-4 4l-4-4v-2.5z" fill="url(#dia)"/><path d="M81 317.5l4 2.5l4-2.5M85 320.0v4" fill="none" stroke="#fbe4fb" stroke-width="0.7"/>
<rect x="61.5" y="331.5" width="12" height="12" fill="#fff" stroke="#222" stroke-width="1"/>
<path d="M85 331.0l4 4.5v2.5l-4 4l-4-4v-2.5z" fill="url(#dia)"/><path d="M81 335.5l4 2.5l4-2.5M85 338.0v4" fill="none" stroke="#fbe4fb" stroke-width="0.7"/>
<rect x="61.5" y="349.5" width="12" height="12" fill="#fff" stroke="#222" stroke-width="1"/>
<path d="M85 349.0l4 4.5v2.5l-4 4l-4-4v-2.5z" fill="url(#dia)"/><path d="M81 353.5l4 2.5l4-2.5M85 356.0v4" fill="none" stroke="#fbe4fb" stroke-width="0.7"/>
<rect x="61.5" y="367.5" width="12" height="12" fill="#fff" stroke="#222" stroke-width="1"/>
<path d="M85 367.0l4 4.5v2.5l-4 4l-4-4v-2.5z" fill="url(#dia)"/><path d="M81 371.5l4 2.5l4-2.5M85 374.0v4" fill="none" stroke="#fbe4fb" stroke-width="0.7"/>
<rect x="61.5" y="385.5" width="12" height="12" fill="#fff" stroke="#222" stroke-width="1"/>
<path d="M85 385.0l4 4.5v2.5l-4 4l-4-4v-2.5z" fill="url(#dia)"/><path d="M81 389.5l4 2.5l4-2.5M85 392.0v4" fill="none" stroke="#fbe4fb" stroke-width="0.7"/>
<rect x="27.5" y="406.5" width="8" height="8" fill="url(#mb)" stroke="#a8a8a8" stroke-width="1" rx="1"/><rect x="29" y="410" width="5" height="1" fill="#333"/>
<rect x="42.5" y="403.5" width="12" height="12" fill="#fff" stroke="#222" stroke-width="1"/>
<path d="M56 406.0l4.5-4.5l4.5 4.5l-4.5 4.5z" fill="#e8c840" stroke="#a08020" stroke-width="0.6"/>
<path d="M65 407.0l3.5-3.5l3.5 3.5l-3.5 3.5z" fill="#e070e0"/>
<path d="M65 414.0l3.5-3.5l3.5 3.5l-3.5 3.5z" fill="#70a0e0"/>
<path d="M62.5 409.0v6h3" fill="none" stroke="#778" stroke-width="1"/>
<rect x="61.5" y="421.5" width="12" height="12" fill="#fff" stroke="#222" stroke-width="1"/>
<path d="M85 421.0l4 4.5v2.5l-4 4l-4-4v-2.5z" fill="url(#dia)"/><path d="M81 425.5l4 2.5l4-2.5M85 428.0v4" fill="none" stroke="#fbe4fb" stroke-width="0.7"/>
<rect x="61.5" y="439.5" width="12" height="12" fill="#fff" stroke="#222" stroke-width="1"/>
<path d="M85 439.0l4 4.5v2.5l-4 4l-4-4v-2.5z" fill="url(#dia)"/><path d="M81 443.5l4 2.5l4-2.5M85 446.0v4" fill="none" stroke="#fbe4fb" stroke-width="0.7"/>
<rect x="61.5" y="457.5" width="12" height="12" fill="#fff" stroke="#222" stroke-width="1"/>
<path d="M85 457.0l4 4.5v2.5l-4 4l-4-4v-2.5z" fill="url(#dia)"/><path d="M81 461.5l4 2.5l4-2.5M85 464.0v4" fill="none" stroke="#fbe4fb" stroke-width="0.7"/>
<rect x="61.5" y="475.5" width="12" height="12" fill="#fff" stroke="#222" stroke-width="1"/>
<path d="M85 475.0l4 4.5v2.5l-4 4l-4-4v-2.5z" fill="url(#dia)"/><path d="M81 479.5l4 2.5l4-2.5M85 482.0v4" fill="none" stroke="#fbe4fb" stroke-width="0.7"/>
<rect x="61.5" y="493.5" width="12" height="12" fill="#fff" stroke="#222" stroke-width="1"/>
<path d="M85 493.0l4 4.5v2.5l-4 4l-4-4v-2.5z" fill="url(#dia)"/><path d="M81 497.5l4 2.5l4-2.5M85 500.0v4" fill="none" stroke="#fbe4fb" stroke-width="0.7"/>
<rect x="61.5" y="511.5" width="12" height="12" fill="#fff" stroke="#222" stroke-width="1"/>
<path d="M85 511.0l4 4.5v2.5l-4 4l-4-4v-2.5z" fill="url(#dia)"/><path d="M81 515.5l4 2.5l4-2.5M85 518.0v4" fill="none" stroke="#fbe4fb" stroke-width="0.7"/>
<rect x="61.5" y="529.5" width="12" height="12" fill="#fff" stroke="#222" stroke-width="1"/>
<path d="M85 529.0l4 4.5v2.5l-4 4l-4-4v-2.5z" fill="url(#dia)"/><path d="M81 533.5l4 2.5l4-2.5M85 536.0v4" fill="none" stroke="#fbe4fb" stroke-width="0.7"/>
<rect x="61.5" y="547.5" width="12" height="12" fill="#fff" stroke="#222" stroke-width="1"/>
<path d="M85 547.0l4 4.5v2.5l-4 4l-4-4v-2.5z" fill="url(#dia)"/><path d="M81 551.5l4 2.5l4-2.5M85 554.0v4" fill="none" stroke="#fbe4fb" stroke-width="0.7"/>
<path d="M31 167h1v1h-1zM31 169h1v1h-1zM31 171h1v1h-1zM31 185h1v1h-1zM31 187h1v1h-1zM31 189h1v1h-1zM31 191h1v1h-1zM31 193h1v1h-1zM31 195h1v1h-1zM31 197h1v1h-1zM31 199h1v1h-1zM31 201h1v1h-1zM31 203h1v1h-1zM31 205h1v1h-1zM31 207h1v1h-1zM31 209h1v1h-1zM31 211h1v1h-1zM31 213h1v1h-1zM31 215h1v1h-1zM31 217h1v1h-1zM31 219h1v1h-1zM31 221h1v1h-1zM31 223h1v1h-1zM31 225h1v1h-1zM31 227h1v1h-1zM31 229h1v1h-1zM31 231h1v1h-1zM31 233h1v1h-1zM31 235h1v1h-1zM31 237h1v1h-1zM31 239h1v1h-1zM31 241h1v1h-1zM31 243h1v1h-1zM31 245h1v1h-1zM31 247h1v1h-1zM31 249h1v1h-1zM31 251h1v1h-1zM31 253h1v1h-1zM31 255h1v1h-1zM31 257h1v1h-1zM31 259h1v1h-1zM31 261h1v1h-1zM31 263h1v1h-1zM31 265h1v1h-1zM31 267h1v1h-1zM31 269h1v1h-1zM31 271h1v1h-1zM31 273h1v1h-1zM31 275h1v1h-1zM31 277h1v1h-1zM31 279h1v1h-1zM31 281h1v1h-1zM31 283h1v1h-1zM31 285h1v1h-1zM31 287h1v1h-1zM31 289h1v1h-1zM31 291h1v1h-1zM31 293h1v1h-1zM31 295h1v1h-1zM31 297h1v1h-1zM31 299h1v1h-1zM31 301h1v1h-1zM31 303h1v1h-1zM31 305h1v1h-1zM31 307h1v1h-1zM31 309h1v1h-1zM31 311h1v1h-1zM31 313h1v1h-1zM31 315h1v1h-1zM31 317h1v1h-1zM31 319h1v1h-1zM31 321h1v1h-1zM31 323h1v1h-1zM31 325h1v1h-1zM31 327h1v1h-1zM31 329h1v1h-1zM31 331h1v1h-1zM31 333h1v1h-1zM31 335h1v1h-1zM31 337h1v1h-1zM31 339h1v1h-1zM31 341h1v1h-1zM31 343h1v1h-1zM31 345h1v1h-1zM31 347h1v1h-1zM31 349h1v1h-1zM31 351h1v1h-1zM31 353h1v1h-1zM31 355h1v1h-1zM31 357h1v1h-1zM31 359h1v1h-1zM31 361h1v1h-1zM31 363h1v1h-1zM31 365h1v1h-1zM31 367h1v1h-1zM31 369h1v1h-1zM31 371h1v1h-1zM31 373h1v1h-1zM31 375h1v1h-1zM31 377h1v1h-1zM31 379h1v1h-1zM31 381h1v1h-1zM31 383h1v1h-1zM31 385h1v1h-1zM31 387h1v1h-1zM31 389h1v1h-1zM31 391h1v1h-1zM31 393h1v1h-1zM31 395h1v1h-1zM31 397h1v1h-1zM31 399h1v1h-1zM31 401h1v1h-1zM31 403h1v1h-1zM31 405h1v1h-1zM50 185h1v1h-1zM50 187h1v1h-1zM50 189h1v1h-1zM50 191h1v1h-1zM50 193h1v1h-1zM50 195h1v1h-1zM50 197h1v1h-1zM50 199h1v1h-1zM50 201h1v1h-1zM50 203h1v1h-1zM50 205h1v1h-1zM50 207h1v1h-1zM50 209h1v1h-1zM50 211h1v1h-1zM50 213h1v1h-1zM50 215h1v1h-1zM50 217h1v1h-1zM50 219h1v1h-1zM50 221h1v1h-1zM50 223h1v1h-1zM50 225h1v1h-1zM50 227h1v1h-1zM50 229h1v1h-1zM50 231h1v1h-1zM50 233h1v1h-1zM50 235h1v1h-1zM50 237h1v1h-1zM50 239h1v1h-1zM50 241h1v1h-1zM50 243h1v1h-1zM50 245h1v1h-1zM50 247h1v1h-1zM50 249h1v1h-1zM50 251h1v1h-1zM50 253h1v1h-1zM50 255h1v1h-1zM50 257h1v1h-1zM50 259h1v1h-1zM50 261h1v1h-1zM50 263h1v1h-1zM50 265h1v1h-1zM50 267h1v1h-1zM50 269h1v1h-1zM50 271h1v1h-1zM50 273h1v1h-1zM50 275h1v1h-1zM50 277h1v1h-1zM50 279h1v1h-1zM50 281h1v1h-1zM50 283h1v1h-1zM50 285h1v1h-1zM50 287h1v1h-1zM50 289h1v1h-1zM50 291h1v1h-1zM50 293h1v1h-1zM50 295h1v1h-1zM50 297h1v1h-1zM50 299h1v1h-1zM50 301h1v1h-1zM50 303h1v1h-1zM50 305h1v1h-1zM50 307h1v1h-1zM50 309h1v1h-1zM50 311h1v1h-1zM50 313h1v1h-1zM50 315h1v1h-1zM50 317h1v1h-1zM50 319h1v1h-1zM50 321h1v1h-1zM50 323h1v1h-1zM50 325h1v1h-1zM50 327h1v1h-1zM50 329h1v1h-1zM50 331h1v1h-1zM50 333h1v1h-1zM50 335h1v1h-1zM50 337h1v1h-1zM50 339h1v1h-1zM50 341h1v1h-1zM50 343h1v1h-1zM50 345h1v1h-1zM50 347h1v1h-1zM50 349h1v1h-1zM50 351h1v1h-1zM50 353h1v1h-1zM50 355h1v1h-1zM50 357h1v1h-1zM50 359h1v1h-1zM50 361h1v1h-1zM50 363h1v1h-1zM50 365h1v1h-1zM50 367h1v1h-1zM50 369h1v1h-1zM50 371h1v1h-1zM50 373h1v1h-1zM50 375h1v1h-1zM50 377h1v1h-1zM50 379h1v1h-1zM50 381h1v1h-1zM50 383h1v1h-1zM50 385h1v1h-1zM50 387h1v1h-1zM50 389h1v1h-1zM50 391h1v1h-1zM50 419h1v1h-1zM50 421h1v1h-1zM50 423h1v1h-1zM50 425h1v1h-1zM50 427h1v1h-1zM50 429h1v1h-1zM50 431h1v1h-1zM50 433h1v1h-1zM50 435h1v1h-1zM50 437h1v1h-1zM50 439h1v1h-1zM50 441h1v1h-1zM50 443h1v1h-1zM50 445h1v1h-1zM50 447h1v1h-1zM50 449h1v1h-1zM50 451h1v1h-1zM50 453h1v1h-1zM50 455h1v1h-1zM50 457h1v1h-1zM50 459h1v1h-1zM50 461h1v1h-1zM50 463h1v1h-1zM50 465h1v1h-1zM50 467h1v1h-1zM50 469h1v1h-1zM50 471h1v1h-1zM50 473h1v1h-1zM50 475h1v1h-1zM50 477h1v1h-1zM50 479h1v1h-1zM50 481h1v1h-1zM50 483h1v1h-1zM50 485h1v1h-1zM50 487h1v1h-1zM50 489h1v1h-1zM50 491h1v1h-1zM50 493h1v1h-1zM50 495h1v1h-1zM50 497h1v1h-1zM50 499h1v1h-1zM50 501h1v1h-1zM50 503h1v1h-1zM50 505h1v1h-1zM50 507h1v1h-1zM50 509h1v1h-1zM50 511h1v1h-1zM50 513h1v1h-1zM50 515h1v1h-1zM50 517h1v1h-1zM50 519h1v1h-1zM50 521h1v1h-1zM50 523h1v1h-1zM50 525h1v1h-1zM50 527h1v1h-1zM50 529h1v1h-1zM50 531h1v1h-1zM50 533h1v1h-1zM50 535h1v1h-1zM50 537h1v1h-1zM50 539h1v1h-1zM50 541h1v1h-1zM50 543h1v1h-1zM50 545h1v1h-1zM50 547h1v1h-1zM50 549h1v1h-1zM50 551h1v1h-1zM50 553h1v1h-1zM17 159h1v1h-1zM19 159h1v1h-1zM21 159h1v1h-1zM36 176h1v1h-1zM38 176h1v1h-1zM40 176h1v1h-1zM51 194h1v1h-1zM53 194h1v1h-1zM55 194h1v1h-1zM57 194h1v1h-1zM59 194h1v1h-1zM51 212h1v1h-1zM53 212h1v1h-1zM55 212h1v1h-1zM57 212h1v1h-1zM59 212h1v1h-1zM51 230h1v1h-1zM53 230h1v1h-1zM55 230h1v1h-1zM57 230h1v1h-1zM59 230h1v1h-1zM51 248h1v1h-1zM53 248h1v1h-1zM55 248h1v1h-1zM57 248h1v1h-1zM59 248h1v1h-1zM51 266h1v1h-1zM53 266h1v1h-1zM55 266h1v1h-1zM57 266h1v1h-1zM59 266h1v1h-1zM51 284h1v1h-1zM53 284h1v1h-1zM55 284h1v1h-1zM57 284h1v1h-1zM59 284h1v1h-1zM51 302h1v1h-1zM53 302h1v1h-1zM55 302h1v1h-1zM57 302h1v1h-1zM59 302h1v1h-1zM51 320h1v1h-1zM53 320h1v1h-1zM55 320h1v1h-1zM57 320h1v1h-1zM59 320h1v1h-1zM51 338h1v1h-1zM53 338h1v1h-1zM55 338h1v1h-1zM57 338h1v1h-1zM59 338h1v1h-1zM51 356h1v1h-1zM53 356h1v1h-1zM55 356h1v1h-1zM57 356h1v1h-1zM59 356h1v1h-1zM51 374h1v1h-1zM53 374h1v1h-1zM55 374h1v1h-1zM57 374h1v1h-1zM59 374h1v1h-1zM51 392h1v1h-1zM53 392h1v1h-1zM55 392h1v1h-1zM57 392h1v1h-1zM59 392h1v1h-1zM36 410h1v1h-1zM38 410h1v1h-1zM40 410h1v1h-1zM51 428h1v1h-1zM53 428h1v1h-1zM55 428h1v1h-1zM57 428h1v1h-1zM59 428h1v1h-1zM51 446h1v1h-1zM53 446h1v1h-1zM55 446h1v1h-1zM57 446h1v1h-1zM59 446h1v1h-1zM51 464h1v1h-1zM53 464h1v1h-1zM55 464h1v1h-1zM57 464h1v1h-1zM59 464h1v1h-1zM51 482h1v1h-1zM53 482h1v1h-1zM55 482h1v1h-1zM57 482h1v1h-1zM59 482h1v1h-1zM51 500h1v1h-1zM53 500h1v1h-1zM55 500h1v1h-1zM57 500h1v1h-1zM59 500h1v1h-1zM51 518h1v1h-1zM53 518h1v1h-1zM55 518h1v1h-1zM57 518h1v1h-1zM59 518h1v1h-1zM51 536h1v1h-1zM53 536h1v1h-1zM55 536h1v1h-1zM57 536h1v1h-1zM59 536h1v1h-1zM51 554h1v1h-1zM53 554h1v1h-1zM55 554h1v1h-1zM57 554h1v1h-1zM59 554h1v1h-1z" fill="#7a7a7a"/>
</svg>
<div class="a" style="left:210px;top:819px;width:1710px;height:19px;background:linear-gradient(#c3d1de,#d6e0ea)"></div>
<div class="t" style="left:214.3px;top:822.84px;font-size:12px;line-height:12px;">Output</div>
<svg width="10" height="10" style="left:1905px;top:824px"><path d="M0.8 0.8L7.7 7.7M7.7 0.8L0.8 7.7" stroke="#000" stroke-width="1.6"/></svg>
<div class="a" style="left:210px;top:838px;width:1710px;height:181px;background:#fff;border-bottom:1px solid #a0a0a0"></div>
<div class="a" style="left:210px;top:838px;width:1710px;height:20px;background:#efefef"></div>
<div class="a" style="left:210px;top:858px;width:18px;height:95px;background:#efefef"></div>
<svg width="12" height="12" style="left:214px;top:842px"><rect x="1.5" y="1.5" width="8" height="8" fill="#f4f4f4" stroke="#8a8a8a" stroke-width="1"/><rect x="3" y="5" width="5" height="1" fill="#444"/></svg>
<div class="t" style="left:233px;top:841.84px;font-size:12px;line-height:12px;font-weight:bold;color:#707070">CH1</div>
<div class="a" style="left:423px;top:858px;width:1px;height:161px;background:#e3e3e3"></div>
<div class="a" style="left:228px;top:876px;width:1692px;height:1px;background:#ececec"></div>
<div class="t" style="left:233px;top:861.34px;font-size:12px;line-height:12px;">Maximum</div>
<div class="t" style="left:428.4px;top:861.34px;font-size:12px;line-height:12px;letter-spacing:-0.6px">50.8V</div>
<div class="a" style="left:228px;top:895px;width:1692px;height:1px;background:#ececec"></div>
<div class="t" style="left:233px;top:880.34px;font-size:12px;line-height:12px;">Minimum</div>
<div class="t" style="left:428.4px;top:880.34px;font-size:12px;line-height:12px;letter-spacing:-0.6px">-8.16V</div>
<div class="a" style="left:228px;top:914px;width:1692px;height:1px;background:#ececec"></div>
<div class="t" style="left:233px;top:899.34px;font-size:12px;line-height:12px;">Top</div>
<div class="t" style="left:428.4px;top:899.34px;font-size:12px;line-height:12px;letter-spacing:-0.6px">50.8V</div>
<div class="a" style="left:228px;top:933px;width:1692px;height:1px;background:#ececec"></div>
<div class="t" style="left:233px;top:918.34px;font-size:12px;line-height:12px;">RMS</div>
<div class="t" style="left:428.4px;top:918.34px;font-size:12px;line-height:12px;letter-spacing:-0.6px">30.7V</div>
<div class="a" style="left:228px;top:952px;width:1692px;height:1px;background:#ececec"></div>
<div class="t" style="left:233px;top:937.34px;font-size:12px;line-height:12px;">Amplitude</div>
<div class="t" style="left:428.4px;top:937.34px;font-size:12px;line-height:12px;letter-spacing:-0.6px">59.0V</div>
<div class="t" style="left:4.4px;top:1024.54px;font-size:12px;line-height:12px;">Running...</div>
<div class="t" style="left:1816px;top:1024.54px;font-size:12px;line-height:12px;">27-11-2016&nbsp; 18:54</div>
</body></html>
